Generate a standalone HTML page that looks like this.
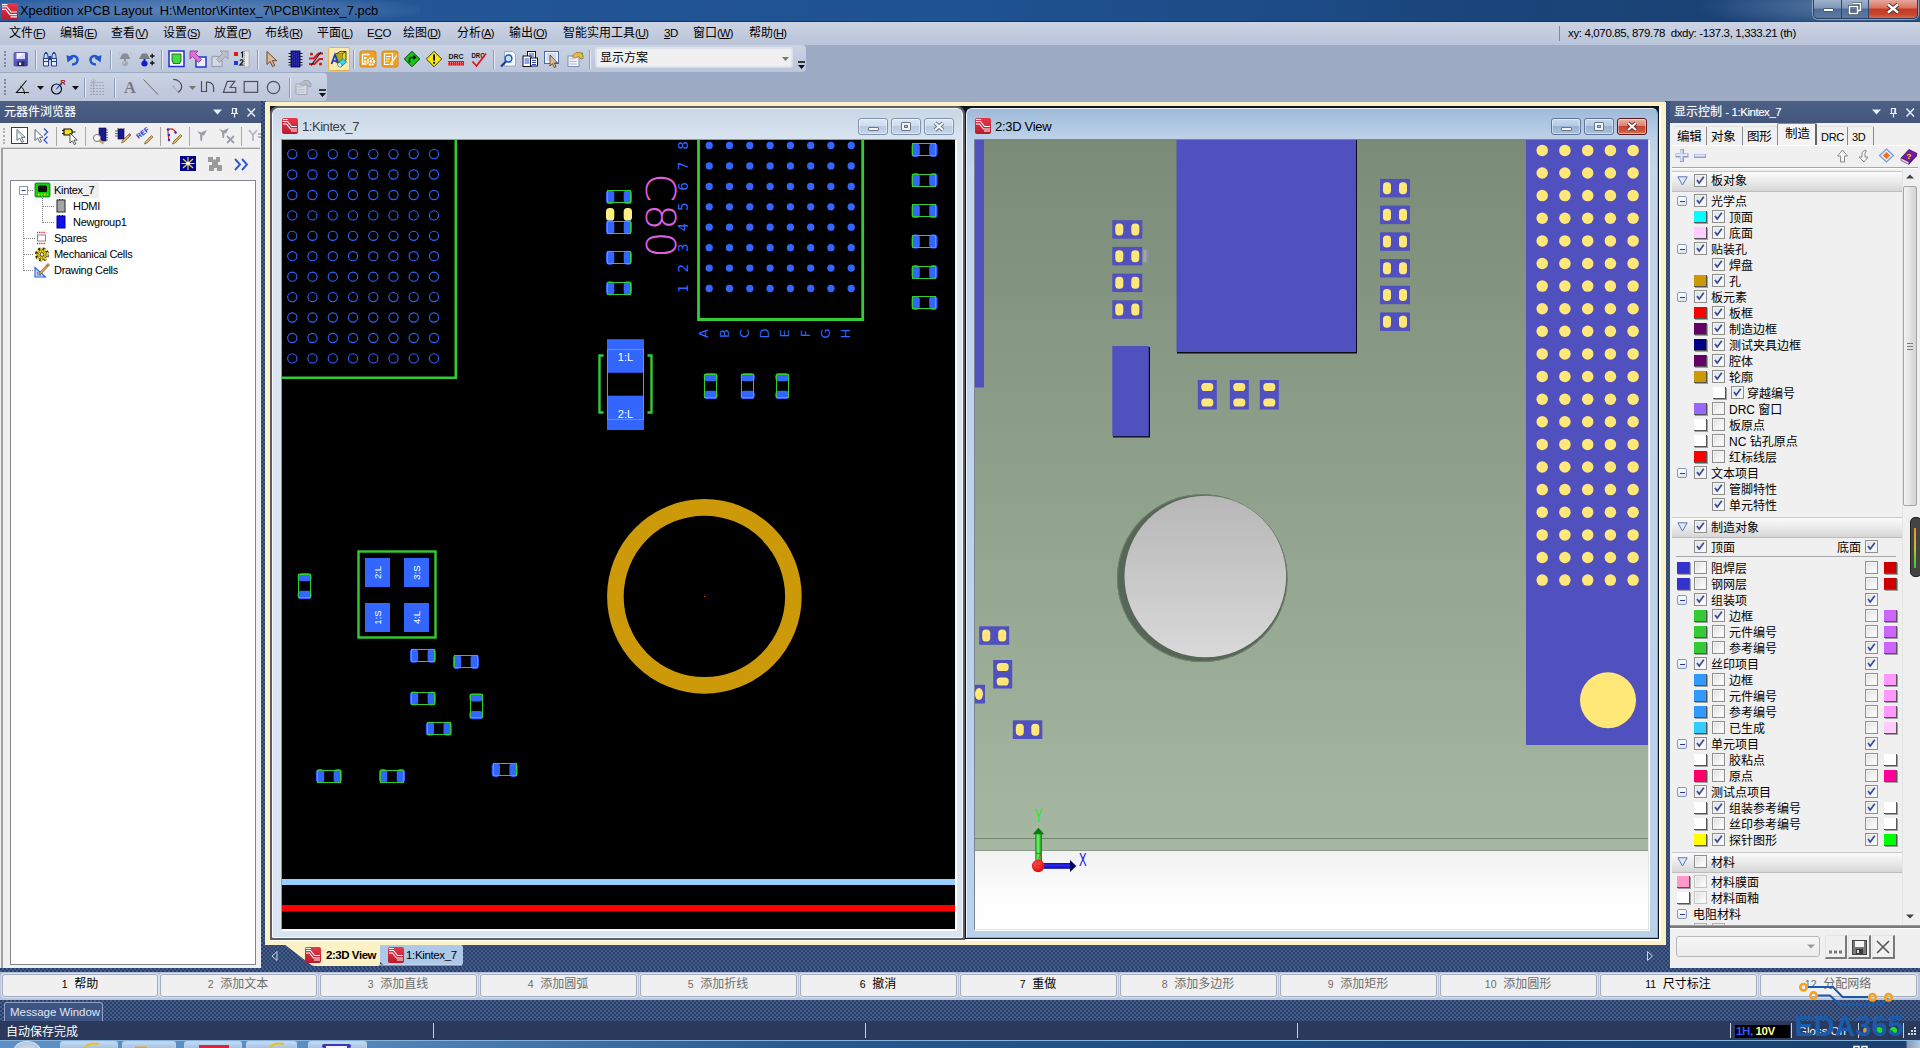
<!DOCTYPE html>
<html lang="zh"><head><meta charset="utf-8"><title>Xpedition xPCB Layout</title><style>
*{box-sizing:border-box;margin:0;padding:0}
html,body{width:1920px;height:1048px;overflow:hidden;background:#9daac4;}
body{font-family:"Liberation Sans","Noto Sans CJK SC",sans-serif;font-size:12px;color:#000;position:relative}
.abs{position:absolute}
#title{left:0;top:0;width:1920px;height:22px;background:linear-gradient(90deg,#2a5c9e 0%,#245696 20%,#1f5291 50%,#1d4d89 62%,#1a4479 80%,#1b4070 100%);border-bottom:1px solid #16345c}
#title .glow{left:-20px;top:-6px;width:440px;height:32px;background:radial-gradient(ellipse at center,rgba(140,170,215,.55) 0%,rgba(120,155,205,.35) 45%,rgba(80,120,180,0) 75%)}
#title .txt{left:20px;top:3px;font-size:12.9px;line-height:15px;color:#000;white-space:pre}
#menu{left:0;top:22px;width:1920px;height:23px;background:linear-gradient(#ccd4e3,#c3ccde 50%,#b9c4d9);}
#menu span{position:absolute;top:2px;font-size:12px;line-height:18px;white-space:nowrap}
#menu span i{font-style:normal;font-size:11px;letter-spacing:-.7px}
#menu u{text-decoration:underline}
.tb{background:linear-gradient(#cbd4e3,#c3ccdf 50%,#bcc6da);border-radius:0 4px 4px 0}
.sep{position:absolute;width:1px;background:#8e9bb5;border-right:1px solid #e6ebf3;width:2px}
.grip{position:absolute;width:3px;border-left:2px dotted #7c88a2;}
</style></head><body>
<div id="title" class="abs"><div class="abs glow"></div><div class="abs" style="left:1700px;top:-10px;width:240px;height:40px;background:radial-gradient(ellipse at 60% 40%,rgba(150,175,210,.5),rgba(120,150,195,.25) 45%,rgba(80,120,180,0) 72%)"></div><svg class="abs" style="left:1px;top:3px" width="17" height="17" viewBox="0 0 16 16"><defs><linearGradient id="lg1_3" x1="0" y1="0" x2="0" y2="1"><stop offset="0" stop-color="#e8384a"/><stop offset="1" stop-color="#b81a2c"/></linearGradient></defs><rect x="0" y="0" width="16" height="16" rx="2" fill="url(#lg1_3)"/><path d="M1 3.5h4.5l4 5H15M1 6h3.5l4 5H15M9 13h6M1 1.5h5" stroke="#fff" stroke-width="1.1" fill="none"/></svg><div class="abs txt">Xpedition xPCB Layout  H:\Mentor\Kintex_7\PCB\Kintex_7.pcb</div>
<div class="abs" style="left:1813px;top:0;width:105px;height:19px;border:1px solid #2a3f5e;border-top:none;border-radius:0 0 5px 5px;overflow:hidden;box-shadow:0 0 0 1px rgba(200,220,245,.55)">
<div class="abs" style="left:0;top:0;width:28px;height:18px;background:linear-gradient(#9fb2cc 0%,#7f97b8 45%,#4f6c95 50%,#5b7aa5 100%);border-right:1px solid #33496b"></div>
<div class="abs" style="left:28px;top:0;width:27px;height:18px;background:linear-gradient(#9fb2cc 0%,#7f97b8 45%,#4f6c95 50%,#5b7aa5 100%);border-right:1px solid #33496b"></div>
<div class="abs" style="left:55px;top:0;width:49px;height:18px;background:linear-gradient(#e6a89c 0%,#d9705f 45%,#c43a22 50%,#c9452e 80%,#d46a4e 100%)"></div>
<div class="abs" style="left:9px;top:8px;width:11px;height:4px;background:#fff;border:1px solid #4b5a70;border-radius:1px"></div>
<svg class="abs" style="left:34px;top:2px" width="14" height="13" viewBox="0 0 14 13"><path d="M4.5 1.5h8v7h-2.5M1.5 4.5h8v7h-8z" fill="none" stroke="#3c4b63" stroke-width="3"/><path d="M4.5 1.5h8v7h-2.5M1.5 4.5h8v7h-8z" fill="none" stroke="#fff" stroke-width="1.6"/></svg>
<svg class="abs" style="left:72px;top:3px" width="14" height="11" viewBox="0 0 14 11"><path d="M2 1.5l10 8M12 1.5l-10 8" stroke="#4a2a2a" stroke-width="4.2"/><path d="M2 1.5l10 8M12 1.5l-10 8" stroke="#fff" stroke-width="2.4"/></svg>
</div>
</div>
<div id="menu" class="abs"><span style="left:9px">文件<i>(<u>F</u>)</i></span><span style="left:60px">编辑<i>(<u>E</u>)</i></span><span style="left:111px">查看<i>(<u>V</u>)</i></span><span style="left:163px">设置<i>(<u>S</u>)</i></span><span style="left:214px">放置<i>(<u>P</u>)</i></span><span style="left:265px">布线<i>(<u>R</u>)</i></span><span style="left:317px">平面<i>(<u>L</u>)</i></span><span style="left:367px"><i style="font-size:11.5px;letter-spacing:-.3px">E<u>C</u>O</i></span><span style="left:403px">绘图<i>(<u>D</u>)</i></span><span style="left:457px">分析<i>(<u>A</u>)</i></span><span style="left:509px">输出<i>(<u>O</u>)</i></span><span style="left:563px">智能实用工具<i>(<u>U</u>)</i></span><span style="left:664px"><i style="font-size:11.5px;letter-spacing:-.3px"><u>3</u>D</i></span><span style="left:693px">窗口<i>(<u>W</u>)</i></span><span style="left:749px">帮助<i>(<u>H</u>)</i></span>
<div class="abs" style="left:1559px;top:4px;width:1px;height:15px;background:#7f8aa3"></div><span style="left:1568px;top:2px;font-size:11.5px;letter-spacing:-.36px;white-space:pre">xy: 4,070.85, 879.78  dxdy: -137.3, 1,333.21 (th)</span></div>
<div class="abs tb" style="left:0;top:45px;width:806px;height:27px"></div>
<div class="abs tb" style="left:0;top:73px;width:327px;height:28px"></div>
<div class="grip" style="left:4px;top:51px;height:16px"></div><div class="grip" style="left:4px;top:79px;height:16px"></div>
<div class="abs" style="left:328px;top:47px;width:22px;height:24px;background:#fbe9b0;border:1px solid #e5b650;border-radius:2px"></div>
<svg class="abs" style="left:12px;top:51px;overflow:visible" width="16" height="16" viewBox="0 0 16 16"><defs><linearGradient id="svg1" x1="0" y1="0" x2="1" y2="1"><stop offset="0" stop-color="#7070e0"/><stop offset="1" stop-color="#3a3aa8"/></linearGradient></defs><rect x="2" y="1.5" width="13.5" height="13.5" rx="1" fill="url(#svg1)" stroke="#5a4aa0" stroke-width=".8"/><path d="M4.5 2h8.5v6h-8.5z" fill="#f4f6ff"/><path d="M4.5 8L13 2v6z" fill="#d4daf4"/><rect x="5.5" y="10.5" width="7" height="4.5" fill="#26264a"/><rect x="7" y="11.5" width="2.2" height="2.5" fill="#e8e8f8"/></svg>
<svg class="abs" style="left:42px;top:51px;overflow:visible" width="16" height="16" viewBox="0 0 16 16"><path d="M1.5 7.5h5V15h-5zM9.5 7.5h5V15h-5z" fill="#e4ecfc" stroke="#24408a" stroke-width="1"/><path d="M2.5 2.5h3l.8 5h-4.6zM10.5 2.5h3l.8 5h-4.6z" fill="#c4d4f4" stroke="#24408a" stroke-width="1"/><rect x="6.5" y="5" width="3" height="4" fill="#24408a"/><path d="M1.5 10.5h5M9.5 10.5h5" stroke="#24408a" stroke-width="1"/><path d="M3 1.5h2M11 1.5h2" stroke="#24408a" stroke-width="1.2"/></svg>
<svg class="abs" style="left:65px;top:51px;overflow:visible" width="16" height="16" viewBox="0 0 16 16"><path d="M4.5 7.5C7 3.5 13 4.5 12.5 9.5c-.3 2.6-2.8 4.2-5.5 3.8" fill="none" stroke="#1d55cc" stroke-width="2.4"/><path d="M1.5 4l1 7.5 6-4.5z" fill="#1d55cc"/></svg>
<svg class="abs" style="left:87px;top:51px;overflow:visible" width="16" height="16" viewBox="0 0 16 16"><g transform="translate(16,0) scale(-1,1)"><path d="M4.5 7.5C7 3.5 13 4.5 12.5 9.5c-.3 2.6-2.8 4.2-5.5 3.8" fill="none" stroke="#1d55cc" stroke-width="2.4"/><path d="M1.5 4l1 7.5 6-4.5z" fill="#1d55cc"/></g></svg>
<svg class="abs" style="left:117px;top:51px;overflow:visible" width="16" height="16" viewBox="0 0 16 16"><path d="M2.5 8L5.5 2.5h5L13.5 8z" fill="#8a8f98"/><rect x="7" y="8" width="2" height="2" fill="#8a8f98"/><circle cx="8" cy="12.3" r="2.9" fill="#a4a9b2"/><circle cx="7.2" cy="11.5" r="1" fill="#c4c8d0"/><path d="M1 3l1.5 1M15 3l-1.5 1M2 1l1 1.2M14 1l-1 1.2" stroke="#a8adb6" stroke-width=".7"/></svg>
<svg class="abs" style="left:139px;top:51px;overflow:visible" width="16" height="16" viewBox="0 0 16 16"><path d="M0 8L3 2.5h5L11 8z" fill="#7a7f88"/><rect x="4.5" y="8" width="2" height="2" fill="#1828c0"/><path d="M5.5 9.5c2 0 3.2 1.5 3.2 3.2 0 1.5-1.2 2.8-3.2 2.8s-3.2-1.3-3.2-2.8c0-1.7 1.2-3.2 3.2-3.2z" fill="#1020d0"/><path d="M11 5h4.5M13.2 2.8v4.4M11 12h4.5M13.2 9.8v4.4" stroke="#111" stroke-width="1.3"/></svg>
<svg class="abs" style="left:168px;top:51px;overflow:visible" width="16" height="16" viewBox="0 0 16 16"><rect x="1" y="0" width="15" height="15.5" fill="#fff" stroke="#1a30d8" stroke-width="1.5"/><path d="M4 3h9v7.5l-1 .5v1.5h-7V11l-1-.5z" fill="#44dc44" stroke="#1a4a1a" stroke-width=".8"/></svg>
<svg class="abs" style="left:190px;top:51px;overflow:visible" width="16" height="16" viewBox="0 0 16 16"><rect x="6" y="6" width="10" height="10" fill="#eef" stroke="#2038d0" stroke-width="1.5"/><path d="M0 0h8l-2.5 2.5 6 6-3 3-6-6L0 8z" fill="#e070d8" stroke="#90308c" stroke-width=".8"/></svg>
<svg class="abs" style="left:212px;top:51px;overflow:visible" width="16" height="16" viewBox="0 0 16 16"><rect x="0" y="5.5" width="10" height="10" fill="#d4d9e2" stroke="#9ca3b0" stroke-width="1.3"/><path d="M16 0H8l2.5 2.5-6 6 3 3 6-6L16 8z" fill="#b9bec8" stroke="#9298a4" stroke-width=".8"/></svg>
<svg class="abs" style="left:234px;top:51px;overflow:visible" width="16" height="16" viewBox="0 0 16 16"><rect x="0" y="1" width="4" height="4" fill="#e01818"/><rect x="0" y="10" width="4" height="4" fill="#1838e0"/><rect x="10.5" y="0" width="4.5" height="16" fill="#e8e8e8" stroke="#666" stroke-width=".6" stroke-dasharray="1 1"/><path d="M7 2l1.5-1v5.5M6 9.5c1.5-1.5 3.5-.5 3 1l-3 3.5h3.5" fill="none" stroke="#111" stroke-width="1.2"/></svg>
<svg class="abs" style="left:264px;top:51px;overflow:visible" width="16" height="16" viewBox="0 0 16 16"><path d="M3 .5v13l3.2-3 2.3 5 2.2-1-2.3-4.8h4.3z" fill="#e0b896" stroke="#5a3a20" stroke-width=".9"/></svg>
<svg class="abs" style="left:287px;top:51px;overflow:visible" width="16" height="16" viewBox="0 0 16 16"><rect x="4" y="0" width="9" height="16" fill="#1a1a90" stroke="#000060" stroke-width=".8"/><path d="M1.5 2.5h2.5M1.5 5.5h2.5M1.5 8.5h2.5M1.5 11.5h2.5M1.5 14h2.5M13 2.5h2.5M13 5.5h2.5M13 8.5h2.5M13 11.5h2.5M13 14h2.5" stroke="#222" stroke-width="1"/><path d="M5 2h7M5 4h7M5 6h7M5 8h7M5 10h7M5 12h7M5 14h7" stroke="#4848c8" stroke-width=".7" stroke-dasharray="1 1"/></svg>
<svg class="abs" style="left:308px;top:51px;overflow:visible" width="16" height="16" viewBox="0 0 16 16"><path d="M1 7.5h4.5l5-5H15M1 13h5.5l5-5H15" fill="none" stroke="#d81818" stroke-width="1.8"/><path d="M3 14.5L13 1" stroke="#111" stroke-width="1.1"/><circle cx="3.5" cy="3" r="1.6" fill="#d81818"/><circle cx="12.5" cy="13" r="1.6" fill="#d81818"/></svg>
<svg class="abs" style="left:331px;top:51px;overflow:visible" width="16" height="16" viewBox="0 0 16 16"><path d="M5 3l4-2.5h6V9l-4 2.5H5z" fill="#e8d820" stroke="#222" stroke-width=".8"/><path d="M5 3h6v8.5M11 3l4-2.5" fill="none" stroke="#222" stroke-width=".8"/><path d="M5 3h6v8.5H5z" fill="#b8a810"/><path d="M.5 13L4 3.5 7.5 13M2 10h4" fill="none" stroke="#1838c8" stroke-width="1.7"/><path d="M7 12l5-4.5 3.5 3.5-5 4.5z" fill="#30d8e8" stroke="#0a6a78" stroke-width=".7"/><ellipse cx="8.8" cy="13.8" rx="2" ry="2.4" transform="rotate(-42 8.8 13.8)" fill="#d8f8ff" stroke="#0a6a78" stroke-width=".6"/></svg>
<svg class="abs" style="left:360px;top:51px;overflow:visible" width="16" height="16" viewBox="0 0 16 16"><rect x="0" y="0" width="16" height="16" rx="2" fill="#f0a020" stroke="#d88810"/><path d="M2.5 3.5h7M2.5 3.5v9.5h4" stroke="#fff" stroke-width="1.3" fill="none"/><rect x="4" y="6" width="2.5" height="2" fill="#fff"/><rect x="4" y="9.5" width="2.5" height="2" fill="#fff"/><circle cx="11" cy="10.5" r="3.2" fill="none" stroke="#fff" stroke-width="2" stroke-dasharray="1.7 .9"/><circle cx="11" cy="10.5" r="1.3" fill="#fff"/></svg>
<svg class="abs" style="left:382px;top:51px;overflow:visible" width="16" height="16" viewBox="0 0 16 16"><rect x="0" y="0" width="16" height="16" rx="2" fill="#f0a020" stroke="#d88810"/><path d="M2.5 2.5h8v11h-8z" stroke="#fff" stroke-width="1.2" fill="none"/><path d="M4 5.5h5M4 8h4M4 10.5h3" stroke="#fff" stroke-width="1"/><path d="M14.5 3.5L8 12l-1 2.5 2.3-1.3L15.5 5z" fill="#fff" stroke="#f0a020" stroke-width=".5"/></svg>
<svg class="abs" style="left:404px;top:51px;overflow:visible" width="16" height="16" viewBox="0 0 16 16"><path d="M8 .3L15.7 8 8 15.7.3 8z" fill="#18c818" stroke="#0a3a0a" stroke-width="1"/><path d="M5.5 11.5V8.2c0-1 .6-1.7 1.7-1.7h3" fill="none" stroke="#111" stroke-width="1.6"/><path d="M9.3 3.8L12.5 6.5 9.3 9.2z" fill="#111"/></svg>
<svg class="abs" style="left:426px;top:51px;overflow:visible" width="16" height="16" viewBox="0 0 16 16"><path d="M8 .3L15.7 8 8 15.7.3 8z" fill="#f8e810" stroke="#3a3a0a" stroke-width="1"/><rect x="7.1" y="3.5" width="1.9" height="6" fill="#111"/><rect x="7.1" y="10.8" width="1.9" height="1.9" fill="#111"/></svg>
<svg class="abs" style="left:448px;top:51px;overflow:visible" width="16" height="16" viewBox="0 0 16 16"><text x="8" y="8" font-size="7.5" font-weight="bold" text-anchor="middle" font-family="Liberation Sans,sans-serif" fill="#111" textLength="15" lengthAdjust="spacingAndGlyphs">DRC</text><rect x="0" y="10" width="16" height="4.5" fill="#e01818"/><path d="M0 11.5h16M0 13h16" stroke="#f8b0b0" stroke-width=".7" stroke-dasharray="1 1"/></svg>
<svg class="abs" style="left:471px;top:51px;overflow:visible" width="16" height="16" viewBox="0 0 16 16"><text x="7" y="6.5" font-size="7" font-weight="bold" text-anchor="middle" font-family="Liberation Sans,sans-serif" fill="#111" textLength="13" lengthAdjust="spacingAndGlyphs">DRC</text><path d="M1.5 10.5l4 4.5L15 2.5" fill="none" stroke="#e01010" stroke-width="1.7"/></svg>
<svg class="abs" style="left:500px;top:51px;overflow:visible" width="16" height="16" viewBox="0 0 16 16"><path d="M4.5 .5h8l3 3V15h-11z" fill="#f8faff" stroke="#8a9ab8" stroke-width=".8"/><path d="M6.5 4h6M6.5 11.5h6" stroke="#b8c4dc" stroke-width=".8"/><circle cx="8.5" cy="7.5" r="3.4" fill="#c8e4ff" stroke="#1858c8" stroke-width="1.5"/><path d="M6 10.5L1 15.5" stroke="#1838a8" stroke-width="2.2"/></svg>
<svg class="abs" style="left:522px;top:51px;overflow:visible" width="16" height="16" viewBox="0 0 16 16"><rect x="5.5" y=".5" width="8" height="9" fill="#fff" stroke="#111" stroke-width="1"/><rect x="1" y="5" width="8" height="10.5" fill="#fff" stroke="#111" stroke-width="1"/><rect x="8.5" y="7" width="7" height="8" fill="#fff" stroke="#111" stroke-width="1"/><path d="M7 3h5M7 5h5M2.5 8h5M2.5 10h5M2.5 12h5M10 9.5h4M10 11.5h4M10 13.5h4" stroke="#2848d8" stroke-width="1"/></svg>
<svg class="abs" style="left:544px;top:51px;overflow:visible" width="16" height="16" viewBox="0 0 16 16"><rect x=".5" y=".5" width="14" height="12" fill="#f4f8ff" stroke="#4868a8" stroke-width="1"/><path d="M2.5 3h10M2.5 5h10M2.5 7h10M2.5 9h10" stroke="#98acd8" stroke-width=".8"/><path d="M6 4v11l2.5-2.3 1.8 3.8 1.8-.8-1.8-3.7h3.4z" fill="#e0b896" stroke="#5a3a20" stroke-width=".8"/></svg>
<svg class="abs" style="left:567px;top:51px;overflow:visible" width="16" height="16" viewBox="0 0 16 16"><rect x="1" y="5" width="11" height="10.5" fill="#f0f4fc" stroke="#7888a8" stroke-width=".9"/><path d="M2.5 8h5M2.5 10.5h7M2.5 13h7" stroke="#a8b4cc" stroke-width=".9"/><path d="M5 5.5L9 1.5h4.5L16 4v3.5l-2 .5-2.5-2.5L8 7z" fill="#e8b848" stroke="#8a6a18" stroke-width=".7"/><path d="M13.5 2l2.5-.5v3" fill="#48a848"/></svg>
<div class="sep" style="left:35px;top:50px;height:19px"></div>
<div class="sep" style="left:110px;top:50px;height:19px"></div>
<div class="sep" style="left:161px;top:50px;height:19px"></div>
<div class="sep" style="left:257px;top:50px;height:19px"></div>
<div class="sep" style="left:353px;top:50px;height:19px"></div>
<div class="sep" style="left:493px;top:50px;height:19px"></div>
<div class="sep" style="left:589px;top:50px;height:19px"></div>
<div class="abs" style="left:596px;top:48px;width:196px;height:19px;background:#f0f0f0;border:1px solid #dfe3ea;border-radius:2px;box-shadow:0 0 0 1px rgba(255,255,255,.35)"><span class="abs" style="left:3px;top:2px;font-size:12px;line-height:15px;white-space:nowrap">显示方案</span></div>
<svg class="abs" style="left:781.5px;top:56.5px;overflow:visible" width="7" height="4" viewBox="0 0 7 4"><path d="M0 0h7L3.5 4z" fill="#7a7672"/></svg>
<svg class="abs" style="left:798px;top:62px;overflow:visible" width="7" height="7" viewBox="0 0 7 7"><path d="M0 0h7" stroke="#111" stroke-width="1.6"/><path d="M0 3h7L3.5 7z" fill="#111"/></svg>
<svg class="abs" style="left:15px;top:79px;overflow:visible" width="16" height="16" viewBox="0 0 16 16"><path d="M14 13.5H1.5L11.5 1.5" fill="none" stroke="#111" stroke-width="1.1"/><path d="M9.5 15c0-3.5-1.5-6-4-8" fill="none" stroke="#111" stroke-width="1"/></svg>
<svg class="abs" style="left:51px;top:79px;overflow:visible" width="16" height="16" viewBox="0 0 16 16"><circle cx="5.5" cy="10" r="5" fill="none" stroke="#111" stroke-width="1.2"/><path d="M5.5 10l5-6" stroke="#1838d8" stroke-width="1.1"/><text x="9.5" y="6" font-size="7" font-weight="bold" fill="#a01010" font-family="Liberation Sans,sans-serif">R</text></svg>
<svg class="abs" style="left:90px;top:79px;overflow:visible" width="16" height="16" viewBox="0 0 16 16"><path d="M3.5 0v16M0 3.5h14" stroke="#a4a9b4" stroke-width=".8"/><path d="M1 1l5 5M6 1L1 6" stroke="#a4a9b4" stroke-width=".6"/><path d="M.5 6.5h15M.5 9.5h15M.5 12.5h15M.5 15.5h15" stroke="#8a8f9a" stroke-width="1.2" stroke-dasharray="1.2 1.8"/></svg>
<svg class="abs" style="left:122px;top:79px;overflow:visible" width="16" height="16" viewBox="0 0 16 16"><text x="8" y="14" font-size="16.5" font-weight="bold" text-anchor="middle" fill="#7c7c80" font-family="Liberation Serif,serif">A</text></svg>
<svg class="abs" style="left:143px;top:79px;overflow:visible" width="16" height="16" viewBox="0 0 16 16"><path d="M.5 .5l14.5 15" stroke="#6c6c72" stroke-width="1"/></svg>
<svg class="abs" style="left:168px;top:79px;overflow:visible" width="16" height="16" viewBox="0 0 16 16"><path d="M5.2 .4C10 .4 13.7 4 13.7 7.5c0 2.5-1.4 4.5-3.5 6" fill="none" stroke="#4a4f5c" stroke-width="1.1"/><path d="M5 7.3l5.2 6.2" stroke="#8a8f9a" stroke-width=".7"/><path d="M5.3 6.2l1.2 1.3-1.2 1.3-1.2-1.3z" fill="#9a9fa8"/></svg>
<svg class="abs" style="left:199px;top:79px;overflow:visible" width="16" height="16" viewBox="0 0 16 16"><path d="M2.5 2.1V12.5H7.5V3.1H9.2C12.5 3.1 14.6 6 14.6 8.8V12.9" fill="none" stroke="#4a4f5c" stroke-width="1.2"/></svg>
<svg class="abs" style="left:221px;top:79px;overflow:visible" width="16" height="16" viewBox="0 0 16 16"><path d="M13.8 2.3H6.3L2.4 13.3H14.7V8.5H9.250z" fill="none" stroke="#4a4f5c" stroke-width="1.2"/></svg>
<svg class="abs" style="left:243px;top:79px;overflow:visible" width="16" height="16" viewBox="0 0 16 16"><rect x="1.2" y="2.5" width="13.4" height="10.8" fill="none" stroke="#4a4f5c" stroke-width="1.2"/></svg>
<svg class="abs" style="left:265px;top:79px;overflow:visible" width="16" height="16" viewBox="0 0 16 16"><circle cx="8.5" cy="8.5" r="6.2" fill="none" stroke="#4a4f5c" stroke-width="1.2"/></svg>
<svg class="abs" style="left:295px;top:79px;overflow:visible" width="16" height="16" viewBox="0 0 16 16"><rect x="1" y="5" width="11" height="10.5" fill="#d4d9e2" stroke="#9ca3b0" stroke-width=".9"/><path d="M2.5 8h5M2.5 10.5h7M2.5 13h7" stroke="#b4bac6" stroke-width=".9"/><path d="M5 5.5L9 1.5h4.5L16 4v3.5l-2 .5-2.5-2.5L8 7z" fill="#b4bac6" stroke="#9298a4" stroke-width=".7"/></svg>
<svg class="abs" style="left:36.5px;top:86px;overflow:visible" width="7" height="4" viewBox="0 0 7 4"><path d="M0 0h7L3.5 4z" fill="#111"/></svg>
<svg class="abs" style="left:71.5px;top:86px;overflow:visible" width="7" height="4" viewBox="0 0 7 4"><path d="M0 0h7L3.5 4z" fill="#111"/></svg>
<svg class="abs" style="left:188.5px;top:86px;overflow:visible" width="7" height="4" viewBox="0 0 7 4"><path d="M0 0h7L3.5 4z" fill="#7a7672"/></svg>
<svg class="abs" style="left:318.5px;top:90px;overflow:visible" width="7" height="7" viewBox="0 0 7 7"><path d="M0 0h7" stroke="#111" stroke-width="1.6"/><path d="M0 3h7L3.5 7z" fill="#111"/></svg>
<div class="sep" style="left:84px;top:78px;height:19px"></div>
<div class="sep" style="left:114px;top:78px;height:19px"></div>
<div class="sep" style="left:289px;top:78px;height:19px"></div>
<div class="abs" style="left:0;top:101px;width:261px;height:867px;background:#f0f0f0"></div>
<div class="abs" style="left:0;top:101px;width:261px;height:22px;background:linear-gradient(#4d5f85,#475a80 60%,#43557b);"><span class="abs" style="left:4px;top:3px;color:#fff;font-size:12px;line-height:17px;white-space:nowrap;text-shadow:0 0 1px rgba(255,255,255,.35)">元器件浏览器</span></div>
<svg class="abs" style="left:212px;top:107px" width="46" height="11" viewBox="0 0 46 11"><path d="M1 2.5h9L5.5 7.5z" fill="#e8ecf4"/><path d="M20.5 1.5h4v5h-4zM19 6.5h7M22.5 6.5v4" fill="none" stroke="#e8ecf4" stroke-width="1.2"/><path d="M24 1.5v5" stroke="#e8ecf4" stroke-width="1.5"/><path d="M35.5 1.5l7.5 8M43 1.5l-7.5 8" stroke="#e8ecf4" stroke-width="1.5"/></svg>
<div class="grip" style="left:3px;top:128px;height:16px;border-left-color:#b0b0b0"></div>
<div class="abs" style="left:11px;top:127px;width:17px;height:17px;border:1px solid #1a30d8;background:#fff"></div>
<svg class="abs" style="left:11.5px;top:127.5px;overflow:visible" width="16" height="16" viewBox="0 0 16 16"><path d="M5 1.5v11l2.7-2.5 2 4.3 1.8-.8-2-4.2h3.6z" fill="#fff" stroke="#4a5a6a" stroke-width=".9"/><path d="M6 4l4 5" stroke="#3a9a3a" stroke-width=".6"/></svg>
<svg class="abs" style="left:33px;top:127.5px;overflow:visible" width="16" height="16" viewBox="0 0 16 16"><path d="M2 1.5v11l2.7-2.5 2 4.3 1.8-.8-2-4.2h3.6z" fill="#fff" stroke="#4a5a6a" stroke-width=".9"/><path d="M11 .5l3.5 3.5-3.5 3.5M14.5 8.5L11 12l3.5 3.5" fill="none" stroke="#2a5ad8" stroke-width="1.3"/></svg>
<svg class="abs" style="left:62px;top:127.5px;overflow:visible" width="16" height="16" viewBox="0 0 16 16"><path d="M2 1h6c3 0 3 6 0 6H2z" fill="#f0e020" stroke="#111" stroke-width="1.2"/><path d="M0 2.5h2M0 5.5h2M10.5 4h3" stroke="#111" stroke-width="1.2"/><path d="M8 5v10l2.4-2.2 1.8 3.7 1.6-.7-1.8-3.7h3.2z" fill="#fff" stroke="#333" stroke-width=".8"/></svg>
<svg class="abs" style="left:92px;top:127.5px;overflow:visible" width="16" height="16" viewBox="0 0 16 16"><rect x="7" y="0" width="7" height="13" fill="#1a1a90" stroke="#000060" stroke-width=".6"/><path d="M14 2h2M14 4.5h2M14 7h2M14 9.5h2M14 12h2" stroke="#555" stroke-width=".8"/><circle cx="5" cy="10" r="3.6" fill="#f4f4f4" stroke="#777" stroke-width="1"/><path d="M7.5 12.5l4 3" stroke="#c8a070" stroke-width="2.2"/></svg>
<svg class="abs" style="left:114.5px;top:127.5px;overflow:visible" width="16" height="16" viewBox="0 0 16 16"><rect x="3" y="1" width="6" height="10" fill="#1a1a90" stroke="#000060" stroke-width=".6"/><path d="M0 3h3M0 5.5h3M0 8h3M3 0v1M6 0v1M9 0v1" stroke="#444" stroke-width=".8"/><path d="M14.5 5.5l1.5 1.5-7 7-2.5 1 1-2.5z" fill="#e0b060" stroke="#7a5a20" stroke-width=".7"/><path d="M13.5 6.5l1.5 1.5" stroke="#e05080" stroke-width="1.5"/></svg>
<svg class="abs" style="left:137px;top:127.5px;overflow:visible" width="16" height="16" viewBox="0 0 16 16"><text x="0" y="0" transform="translate(1.5 11) rotate(-38)" font-size="7" font-weight="bold" fill="#1a30d8" font-family="Liberation Sans,sans-serif">REF</text><path d="M14.5 7.5l1.5 1.5-6 6-2.5 1 1-2.5z" fill="#e0b060" stroke="#7a5a20" stroke-width=".7"/></svg>
<svg class="abs" style="left:166px;top:127.5px;overflow:visible" width="16" height="16" viewBox="0 0 16 16"><path d="M2 1.5c5-2 7 1 8 3.5M2 1.5c0 5 0 7 1 10" fill="none" stroke="#e01818" stroke-width="1.1"/><circle cx="2" cy="1.5" r="1.2" fill="#1a30d8"/><circle cx="9.5" cy="4.5" r="1.2" fill="#1a30d8"/><circle cx="3" cy="12" r="1.2" fill="#1a30d8"/><circle cx="3" cy="7" r="1.2" fill="#1a30d8"/><path d="M14.5 6.5l1.5 1.5-7 7-2.5 1 1-2.5z" fill="#e0b060" stroke="#7a5a20" stroke-width=".7"/></svg>
<svg class="abs" style="left:195px;top:127.5px;overflow:visible" width="16" height="16" viewBox="0 0 16 16"><path d="M2 3l4 1.5L12 2l-3 5.5L7.5 7 7 13H5.5L5 6.5z" fill="#9a9ea6"/></svg>
<svg class="abs" style="left:218.5px;top:127.5px;overflow:visible" width="16" height="16" viewBox="0 0 16 16"><path d="M0 1l4 1.5L10 0 7 5.5 5.5 5 5 10H3.5L3 4.5z" fill="#9a9ea6"/><path d="M8 8l7 7M15 8l-7 7" stroke="#9a9ea6" stroke-width="1.8"/></svg>
<div class="abs" style="left:247px;top:127px;width:14px;height:17px;overflow:hidden"><svg class="abs" style="left:0px;top:0.5px;overflow:visible" width="16" height="16" viewBox="0 0 16 16"><path d="M2 2l4 5v6M10 2L6 7M11 6h5M11 9h5" fill="none" stroke="#b4b8c0" stroke-width="1.8"/></svg></div>
<div class="abs" style="left:56px;top:127px;width:1px;height:19px;background:#a8a8a8"></div>
<div class="abs" style="left:85px;top:127px;width:1px;height:19px;background:#a8a8a8"></div>
<div class="abs" style="left:160px;top:127px;width:1px;height:19px;background:#a8a8a8"></div>
<div class="abs" style="left:189px;top:127px;width:1px;height:19px;background:#a8a8a8"></div>
<div class="abs" style="left:241px;top:127px;width:1px;height:19px;background:#a8a8a8"></div>
<div class="abs" style="left:1px;top:147px;width:259px;height:821px;border-left:2px solid #a0a0a0;border-top:2px solid #a0a0a0;border-image:linear-gradient(#a0a0a0,#a0a0a0) 1;background:#f0f0f0"></div>
<div class="abs" style="left:1px;top:147px;width:259px;height:1px;background:#d8d8d8"></div>
<svg class="abs" style="left:180px;top:156px;overflow:visible" width="16" height="15" viewBox="0 0 16 15"><rect x="0" y="0" width="16" height="15" fill="#00008b"/><path d="M8 1v13M1.5 7.5h13M3 3l10 9M13 3L3 12" stroke="#f0e040" stroke-width="1.1"/><circle cx="8" cy="7.5" r="1.8" fill="#fffbd0"/></svg>
<svg class="abs" style="left:207px;top:156px;overflow:visible" width="16" height="16" viewBox="0 0 16 16"><path d="M1 1h5v2.5h3V1h4v5h-2v3h4v6h-5v-3H7v3H2V9h3V6H1z" fill="#9a9a9a"/></svg>
<svg class="abs" style="left:234px;top:156.5px;overflow:visible" width="14" height="15" viewBox="0 0 14 15"><path d="M1 2l5 5.5-5 5.5M8 2l5 5.5-5 5.5" fill="none" stroke="#2a5ad8" stroke-width="1.9"/></svg>
<div class="abs" style="left:10px;top:180px;width:246px;height:785px;background:#fff;border:1px solid #828790"></div>
<svg class="abs" style="left:10px;top:180px" width="100" height="100" viewBox="10 180 100 100"><path d="M23.5 196v75M24 238.5h12M24 254.5h10M24 270.5h10M28 190.5h6M42.5 198v25M43 206.5h11M43 222.5h11" fill="none" stroke="#808080" stroke-width="1" stroke-dasharray="1 1"/><rect x="19.5" y="186.5" width="8" height="8" fill="#fff" stroke="#8a9ab0"/><path d="M21.5 190.5h4" stroke="#2a3a8a" stroke-width="1"/></svg>
<div class="abs" style="left:53px;top:182px;width:46px;height:16px;background:#efefef"></div>
<svg class="abs" style="left:34.5px;top:183px;overflow:visible" width="15" height="14" viewBox="0 0 15 14"><rect x="0" y="0" width="15" height="14" rx="1" fill="#10d010" stroke="#0a700a" stroke-width=".8"/><rect x="3" y="2.5" width="9" height="6.5" rx="1.5" fill="#111"/><path d="M3 11.5h1.5M6 11.5h1.5M9 11.5h1.5M12 11.5h1" stroke="#f0e020" stroke-width="1.5"/></svg>
<span class="abs" style="left:54px;top:182px;font-size:11px;line-height:16px;white-space:nowrap;letter-spacing:-.3px">Kintex_7</span>
<svg class="abs" style="left:56px;top:199px;overflow:visible" width="10" height="14" viewBox="0 0 10 14"><rect x="1" y="1" width="8" height="12" fill="#b8b8b8" stroke="#222" stroke-width="1"/><path d="M1.5 3h7M1.5 5h7M1.5 7h7M1.5 9h7M1.5 11h7" stroke="#555" stroke-width=".7" stroke-dasharray="1 1"/><path d="M3.5 0v1M6.5 0v1" stroke="#222"/></svg>
<span class="abs" style="left:73px;top:198px;font-size:11px;line-height:16px;white-space:nowrap;letter-spacing:-.3px">HDMI</span>
<svg class="abs" style="left:56px;top:215px;overflow:visible" width="10" height="14" viewBox="0 0 10 14"><rect x="1" y="1" width="8" height="12" fill="#1010e8" stroke="#00009a" stroke-width="1"/><path d="M3.5 0v1M6.5 0v1" stroke="#00009a"/></svg>
<span class="abs" style="left:73px;top:214px;font-size:11px;line-height:16px;white-space:nowrap;letter-spacing:-.3px">Newgroup1</span>
<svg class="abs" style="left:36px;top:231px;overflow:visible" width="11" height="14" viewBox="0 0 11 14"><rect x="1.5" y="4" width="8" height="6" fill="#fff" stroke="#888" stroke-width="1"/><path d="M1 1.5h9M1 12.5h9" stroke="#e01818" stroke-width="1.6" stroke-dasharray="1.2 1"/></svg>
<span class="abs" style="left:54px;top:230px;font-size:11px;line-height:16px;white-space:nowrap;letter-spacing:-.3px">Spares</span>
<svg class="abs" style="left:33.5px;top:247px;overflow:visible" width="16" height="14" viewBox="0 0 16 14"><circle cx="8" cy="7.5" r="5" fill="none" stroke="#222" stroke-width="4.2" stroke-dasharray="2.2 1.72"/><circle cx="8" cy="7.5" r="5" fill="#e8d020" stroke="#222" stroke-width=".9"/><circle cx="8" cy="7.5" r="5.5" fill="none" stroke="#e8d020" stroke-width="2.2" stroke-dasharray="2 1.92"/><circle cx="8" cy="7.5" r="1.8" fill="#fff" stroke="#222" stroke-width=".9"/><circle cx="8" cy="7.5" r="3.6" fill="none" stroke="#222" stroke-width=".7" stroke-dasharray="1 1.2"/></svg>
<span class="abs" style="left:54px;top:246px;font-size:11px;line-height:16px;white-space:nowrap;letter-spacing:-.3px">Mechanical Cells</span>
<svg class="abs" style="left:33.5px;top:263px;overflow:visible" width="16" height="14" viewBox="0 0 16 14"><path d="M1 4.5V14h10.5z" fill="#c8dcf8" stroke="#2a5ad8" stroke-width="1.1"/><path d="M3.5 9v3h3.5z" fill="#fff" stroke="#2a5ad8" stroke-width=".7"/><path d="M14 .5l1.5 1.5-8 8.5-2.5 1 1-2.5z" fill="#e8a050" stroke="#8a5a20" stroke-width=".7"/><path d="M12.5 2l1.5 1.5" stroke="#e05070" stroke-width="1.6"/></svg>
<span class="abs" style="left:54px;top:262px;font-size:11px;line-height:16px;white-space:nowrap;letter-spacing:-.3px">Drawing Cells</span>
<div class="abs" style="left:261px;top:101px;width:5px;height:870px;background-color:#435e8d;background-image:radial-gradient(circle at 1px 1px,#2b3f68 .75px,rgba(43,63,104,0) 1.15px),radial-gradient(circle at 3px 3px,#2b3f68 .75px,rgba(43,63,104,0) 1.15px);background-size:4px 4px"></div>
<div class="abs" style="left:1665px;top:101px;width:5px;height:870px;background-color:#435e8d;background-image:radial-gradient(circle at 1px 1px,#2b3f68 .75px,rgba(43,63,104,0) 1.15px),radial-gradient(circle at 3px 3px,#2b3f68 .75px,rgba(43,63,104,0) 1.15px);background-size:4px 4px"></div>
<div class="abs" style="left:261px;top:940px;width:1409px;height:32px;background-color:#435e8d;background-image:radial-gradient(circle at 1px 1px,#2b3f68 .75px,rgba(43,63,104,0) 1.15px),radial-gradient(circle at 3px 3px,#2b3f68 .75px,rgba(43,63,104,0) 1.15px);background-size:4px 4px"></div><div class="abs" style="left:0;top:968px;width:1920px;height:4px;background-color:#435e8d;background-image:radial-gradient(circle at 1px 1px,#2b3f68 .75px,rgba(43,63,104,0) 1.15px),radial-gradient(circle at 3px 3px,#2b3f68 .75px,rgba(43,63,104,0) 1.15px);background-size:4px 4px"></div>
<div class="abs" style="left:265px;top:102px;width:1401px;height:842.5px;background:#fdf1c6"></div>
<div class="abs" style="left:270px;top:106px;width:1391px;height:835px;background:#fff"></div>
<div class="abs" style="left:270px;top:106px;width:1389px;height:833px;background:#10141c"></div>
<div class="abs" style="left:272px;top:108px;width:691px;height:830px;background:linear-gradient(#c9d7e6 0,#d9e4f0 30px,#dce6f2 60px,#d9e5f2 100%);border:1px solid #f6f9fc;border-radius:6px 6px 0 0;box-shadow:0 0 0 2px #5c5f66"></div>
<div class="abs" style="left:281px;top:139px;width:675px;height:791px;border:1px solid #8e99a8;border-right-color:#f4f7fa;border-bottom-color:#f4f7fa;box-shadow:1px 1px 0 #fff"></div>
<svg class="abs" style="left:282px;top:118px" width="16" height="16" viewBox="0 0 16 16"><defs><linearGradient id="lg282_118" x1="0" y1="0" x2="0" y2="1"><stop offset="0" stop-color="#e8384a"/><stop offset="1" stop-color="#b81a2c"/></linearGradient></defs><rect x="0" y="0" width="16" height="16" rx="2" fill="url(#lg282_118)"/><path d="M1 3.5h4.5l4 5H15M1 6h3.5l4 5H15M9 13h6M1 1.5h5" stroke="#fff" stroke-width="1.1" fill="none"/></svg>
<span class="abs" style="left:302px;top:119px;font-size:13px;line-height:16px;color:#3c3c3c;white-space:nowrap;letter-spacing:-.45px">1:Kintex_7</span>
<div class="abs" style="left:858px;top:118px;width:30px;height:17px;border:1px solid #7f93b0;border-radius:3px;background:linear-gradient(#dfe8f3 0%,#cfdcec 45%,#b9cbe1 50%,#c5d5e9 100%);box-shadow:inset 0 0 0 1px rgba(255,255,255,.45)"></div><div class="abs" style="left:891px;top:118px;width:30px;height:17px;border:1px solid #7f93b0;border-radius:3px;background:linear-gradient(#dfe8f3 0%,#cfdcec 45%,#b9cbe1 50%,#c5d5e9 100%);box-shadow:inset 0 0 0 1px rgba(255,255,255,.45)"></div><div class="abs" style="left:924px;top:118px;width:30px;height:17px;border:1px solid #7f93b0;border-radius:3px;background:linear-gradient(#dfe8f3 0%,#cfdcec 45%,#b9cbe1 50%,#c5d5e9 100%);box-shadow:inset 0 0 0 1px rgba(255,255,255,.45)"></div><div class="abs" style="left:868px;top:127px;width:11px;height:4px;background:#f4f4f4;border:1px solid #6a7486;border-radius:1px"></div><div class="abs" style="left:901px;top:122px;width:10px;height:9px;background:#f4f4f4;border:1px solid #6a7486;border-radius:1px"><div class="abs" style="left:2px;top:2px;width:4px;height:3px;border:1px solid #6a7486;background:#a9c1de"></div></div><svg class="abs" style="left:933px;top:121px" width="12" height="11" viewBox="0 0 12 11"><path d="M2 2l8 7M10 2l-8 7" stroke="#6a7486" stroke-width="4"/><path d="M2 2l8 7M10 2l-8 7" stroke="#f8f8f8" stroke-width="2.2"/></svg>
<svg class="abs" style="left:282px;top:140px" width="673" height="789" viewBox="282 140 673 789"><rect x="282" y="140" width="673" height="789" fill="#000"/><g fill="none" stroke="#3366ff" stroke-width="1.1"><circle cx="292.3" cy="154.1" r="4.6"/><circle cx="312.5" cy="154.1" r="4.6"/><circle cx="332.8" cy="154.1" r="4.6"/><circle cx="353.0" cy="154.1" r="4.6"/><circle cx="373.3" cy="154.1" r="4.6"/><circle cx="393.5" cy="154.1" r="4.6"/><circle cx="413.7" cy="154.1" r="4.6"/><circle cx="434.0" cy="154.1" r="4.6"/><circle cx="292.3" cy="174.5" r="4.6"/><circle cx="312.5" cy="174.5" r="4.6"/><circle cx="332.8" cy="174.5" r="4.6"/><circle cx="353.0" cy="174.5" r="4.6"/><circle cx="373.3" cy="174.5" r="4.6"/><circle cx="393.5" cy="174.5" r="4.6"/><circle cx="413.7" cy="174.5" r="4.6"/><circle cx="434.0" cy="174.5" r="4.6"/><circle cx="292.3" cy="195.0" r="4.6"/><circle cx="312.5" cy="195.0" r="4.6"/><circle cx="332.8" cy="195.0" r="4.6"/><circle cx="353.0" cy="195.0" r="4.6"/><circle cx="373.3" cy="195.0" r="4.6"/><circle cx="393.5" cy="195.0" r="4.6"/><circle cx="413.7" cy="195.0" r="4.6"/><circle cx="434.0" cy="195.0" r="4.6"/><circle cx="292.3" cy="215.4" r="4.6"/><circle cx="312.5" cy="215.4" r="4.6"/><circle cx="332.8" cy="215.4" r="4.6"/><circle cx="353.0" cy="215.4" r="4.6"/><circle cx="373.3" cy="215.4" r="4.6"/><circle cx="393.5" cy="215.4" r="4.6"/><circle cx="413.7" cy="215.4" r="4.6"/><circle cx="434.0" cy="215.4" r="4.6"/><circle cx="292.3" cy="235.8" r="4.6"/><circle cx="312.5" cy="235.8" r="4.6"/><circle cx="332.8" cy="235.8" r="4.6"/><circle cx="353.0" cy="235.8" r="4.6"/><circle cx="373.3" cy="235.8" r="4.6"/><circle cx="393.5" cy="235.8" r="4.6"/><circle cx="413.7" cy="235.8" r="4.6"/><circle cx="434.0" cy="235.8" r="4.6"/><circle cx="292.3" cy="256.2" r="4.6"/><circle cx="312.5" cy="256.2" r="4.6"/><circle cx="332.8" cy="256.2" r="4.6"/><circle cx="353.0" cy="256.2" r="4.6"/><circle cx="373.3" cy="256.2" r="4.6"/><circle cx="393.5" cy="256.2" r="4.6"/><circle cx="413.7" cy="256.2" r="4.6"/><circle cx="434.0" cy="256.2" r="4.6"/><circle cx="292.3" cy="276.7" r="4.6"/><circle cx="312.5" cy="276.7" r="4.6"/><circle cx="332.8" cy="276.7" r="4.6"/><circle cx="353.0" cy="276.7" r="4.6"/><circle cx="373.3" cy="276.7" r="4.6"/><circle cx="393.5" cy="276.7" r="4.6"/><circle cx="413.7" cy="276.7" r="4.6"/><circle cx="434.0" cy="276.7" r="4.6"/><circle cx="292.3" cy="297.1" r="4.6"/><circle cx="312.5" cy="297.1" r="4.6"/><circle cx="332.8" cy="297.1" r="4.6"/><circle cx="353.0" cy="297.1" r="4.6"/><circle cx="373.3" cy="297.1" r="4.6"/><circle cx="393.5" cy="297.1" r="4.6"/><circle cx="413.7" cy="297.1" r="4.6"/><circle cx="434.0" cy="297.1" r="4.6"/><circle cx="292.3" cy="317.5" r="4.6"/><circle cx="312.5" cy="317.5" r="4.6"/><circle cx="332.8" cy="317.5" r="4.6"/><circle cx="353.0" cy="317.5" r="4.6"/><circle cx="373.3" cy="317.5" r="4.6"/><circle cx="393.5" cy="317.5" r="4.6"/><circle cx="413.7" cy="317.5" r="4.6"/><circle cx="434.0" cy="317.5" r="4.6"/><circle cx="292.3" cy="338.0" r="4.6"/><circle cx="312.5" cy="338.0" r="4.6"/><circle cx="332.8" cy="338.0" r="4.6"/><circle cx="353.0" cy="338.0" r="4.6"/><circle cx="373.3" cy="338.0" r="4.6"/><circle cx="393.5" cy="338.0" r="4.6"/><circle cx="413.7" cy="338.0" r="4.6"/><circle cx="434.0" cy="338.0" r="4.6"/><circle cx="292.3" cy="358.4" r="4.6"/><circle cx="312.5" cy="358.4" r="4.6"/><circle cx="332.8" cy="358.4" r="4.6"/><circle cx="353.0" cy="358.4" r="4.6"/><circle cx="373.3" cy="358.4" r="4.6"/><circle cx="393.5" cy="358.4" r="4.6"/><circle cx="413.7" cy="358.4" r="4.6"/><circle cx="434.0" cy="358.4" r="4.6"/></g><path d="M455.8 140V377.8H282" fill="none" stroke="#33cc33" stroke-width="2.6"/><path d="M698.5 140V319.5H862.7V140" fill="none" stroke="#33cc33" stroke-width="2.8"/><g fill="#3366ff"><circle cx="709.2" cy="145.5" r="3.65"/><circle cx="729.5" cy="145.5" r="3.65"/><circle cx="749.8" cy="145.5" r="3.65"/><circle cx="770.1" cy="145.5" r="3.65"/><circle cx="790.4" cy="145.5" r="3.65"/><circle cx="810.7" cy="145.5" r="3.65"/><circle cx="830.9" cy="145.5" r="3.65"/><circle cx="851.2" cy="145.5" r="3.65"/><circle cx="709.2" cy="165.9" r="3.65"/><circle cx="729.5" cy="165.9" r="3.65"/><circle cx="749.8" cy="165.9" r="3.65"/><circle cx="770.1" cy="165.9" r="3.65"/><circle cx="790.4" cy="165.9" r="3.65"/><circle cx="810.7" cy="165.9" r="3.65"/><circle cx="830.9" cy="165.9" r="3.65"/><circle cx="851.2" cy="165.9" r="3.65"/><circle cx="709.2" cy="186.4" r="3.65"/><circle cx="729.5" cy="186.4" r="3.65"/><circle cx="749.8" cy="186.4" r="3.65"/><circle cx="770.1" cy="186.4" r="3.65"/><circle cx="790.4" cy="186.4" r="3.65"/><circle cx="810.7" cy="186.4" r="3.65"/><circle cx="830.9" cy="186.4" r="3.65"/><circle cx="851.2" cy="186.4" r="3.65"/><circle cx="709.2" cy="206.8" r="3.65"/><circle cx="729.5" cy="206.8" r="3.65"/><circle cx="749.8" cy="206.8" r="3.65"/><circle cx="770.1" cy="206.8" r="3.65"/><circle cx="790.4" cy="206.8" r="3.65"/><circle cx="810.7" cy="206.8" r="3.65"/><circle cx="830.9" cy="206.8" r="3.65"/><circle cx="851.2" cy="206.8" r="3.65"/><circle cx="709.2" cy="227.2" r="3.65"/><circle cx="729.5" cy="227.2" r="3.65"/><circle cx="749.8" cy="227.2" r="3.65"/><circle cx="770.1" cy="227.2" r="3.65"/><circle cx="790.4" cy="227.2" r="3.65"/><circle cx="810.7" cy="227.2" r="3.65"/><circle cx="830.9" cy="227.2" r="3.65"/><circle cx="851.2" cy="227.2" r="3.65"/><circle cx="709.2" cy="247.7" r="3.65"/><circle cx="729.5" cy="247.7" r="3.65"/><circle cx="749.8" cy="247.7" r="3.65"/><circle cx="770.1" cy="247.7" r="3.65"/><circle cx="790.4" cy="247.7" r="3.65"/><circle cx="810.7" cy="247.7" r="3.65"/><circle cx="830.9" cy="247.7" r="3.65"/><circle cx="851.2" cy="247.7" r="3.65"/><circle cx="709.2" cy="268.1" r="3.65"/><circle cx="729.5" cy="268.1" r="3.65"/><circle cx="749.8" cy="268.1" r="3.65"/><circle cx="770.1" cy="268.1" r="3.65"/><circle cx="790.4" cy="268.1" r="3.65"/><circle cx="810.7" cy="268.1" r="3.65"/><circle cx="830.9" cy="268.1" r="3.65"/><circle cx="851.2" cy="268.1" r="3.65"/><circle cx="709.2" cy="288.5" r="3.65"/><circle cx="729.5" cy="288.5" r="3.65"/><circle cx="749.8" cy="288.5" r="3.65"/><circle cx="770.1" cy="288.5" r="3.65"/><circle cx="790.4" cy="288.5" r="3.65"/><circle cx="810.7" cy="288.5" r="3.65"/><circle cx="830.9" cy="288.5" r="3.65"/><circle cx="851.2" cy="288.5" r="3.65"/></g><text transform="translate(688 145.5) rotate(-90)" text-anchor="middle" font-size="13.5" fill="#3366ff" font-family="DejaVu Sans,sans-serif">8</text><text transform="translate(688 165.9) rotate(-90)" text-anchor="middle" font-size="13.5" fill="#3366ff" font-family="DejaVu Sans,sans-serif">7</text><text transform="translate(688 186.4) rotate(-90)" text-anchor="middle" font-size="13.5" fill="#3366ff" font-family="DejaVu Sans,sans-serif">6</text><text transform="translate(688 206.8) rotate(-90)" text-anchor="middle" font-size="13.5" fill="#3366ff" font-family="DejaVu Sans,sans-serif">5</text><text transform="translate(688 227.2) rotate(-90)" text-anchor="middle" font-size="13.5" fill="#3366ff" font-family="DejaVu Sans,sans-serif">4</text><text transform="translate(688 247.7) rotate(-90)" text-anchor="middle" font-size="13.5" fill="#3366ff" font-family="DejaVu Sans,sans-serif">3</text><text transform="translate(688 268.1) rotate(-90)" text-anchor="middle" font-size="13.5" fill="#3366ff" font-family="DejaVu Sans,sans-serif">2</text><text transform="translate(688 288.5) rotate(-90)" text-anchor="middle" font-size="13.5" fill="#3366ff" font-family="DejaVu Sans,sans-serif">1</text><text transform="translate(708.2 333.5) rotate(-90)" text-anchor="middle" font-size="13" fill="#3366ff" font-family="DejaVu Sans,sans-serif">A</text><text transform="translate(728.5 333.5) rotate(-90)" text-anchor="middle" font-size="13" fill="#3366ff" font-family="DejaVu Sans,sans-serif">B</text><text transform="translate(748.8 333.5) rotate(-90)" text-anchor="middle" font-size="13" fill="#3366ff" font-family="DejaVu Sans,sans-serif">C</text><text transform="translate(769.1 333.5) rotate(-90)" text-anchor="middle" font-size="13" fill="#3366ff" font-family="DejaVu Sans,sans-serif">D</text><text transform="translate(789.4 333.5) rotate(-90)" text-anchor="middle" font-size="13" fill="#3366ff" font-family="DejaVu Sans,sans-serif">E</text><text transform="translate(809.7 333.5) rotate(-90)" text-anchor="middle" font-size="13" fill="#3366ff" font-family="DejaVu Sans,sans-serif">F</text><text transform="translate(829.9 333.5) rotate(-90)" text-anchor="middle" font-size="13" fill="#3366ff" font-family="DejaVu Sans,sans-serif">G</text><text transform="translate(850.2 333.5) rotate(-90)" text-anchor="middle" font-size="13" fill="#3366ff" font-family="DejaVu Sans,sans-serif">H</text><rect x="606" y="207.9" width="8.3" height="13" rx="3.6" fill="#ffee80"/><rect x="623.7" y="207.9" width="8.3" height="13" rx="3.6" fill="#ffee80"/><rect x="606" y="190" width="8.3" height="14" rx="3.6" fill="#3366ff"/><rect x="623.7" y="190" width="8.3" height="14" rx="3.6" fill="#3366ff"/><rect x="607.5" y="190.5" width="23" height="12" fill="none" stroke="#33cc33" stroke-width="1"/><rect x="606" y="220.3" width="8.3" height="14" rx="3.6" fill="#3366ff"/><rect x="623.7" y="220.3" width="8.3" height="14" rx="3.6" fill="#3366ff"/><rect x="607.5" y="221.5" width="23" height="12" fill="none" stroke="#33cc33" stroke-width="1"/><rect x="606" y="250.7" width="8.3" height="14" rx="3.6" fill="#3366ff"/><rect x="623.7" y="250.7" width="8.3" height="14" rx="3.6" fill="#3366ff"/><rect x="607.5" y="251.5" width="23" height="12" fill="none" stroke="#33cc33" stroke-width="1"/><rect x="606" y="281.2" width="8.3" height="14" rx="3.6" fill="#3366ff"/><rect x="623.7" y="281.2" width="8.3" height="14" rx="3.6" fill="#3366ff"/><rect x="607.5" y="282.5" width="23" height="12" fill="none" stroke="#33cc33" stroke-width="1"/><rect x="911.5" y="142.9" width="8.3" height="14" rx="3.6" fill="#3366ff"/><rect x="929.2" y="142.9" width="8.3" height="14" rx="3.6" fill="#3366ff"/><rect x="912.5" y="143.5" width="23" height="12" fill="none" stroke="#33cc33" stroke-width="1"/><rect x="911.5" y="173" width="8.3" height="14" rx="3.6" fill="#3366ff"/><rect x="929.2" y="173" width="8.3" height="14" rx="3.6" fill="#3366ff"/><rect x="912.5" y="174.5" width="23" height="12" fill="none" stroke="#33cc33" stroke-width="1"/><rect x="911.5" y="204" width="8.3" height="14" rx="3.6" fill="#3366ff"/><rect x="929.2" y="204" width="8.3" height="14" rx="3.6" fill="#3366ff"/><rect x="912.5" y="204.5" width="23" height="12" fill="none" stroke="#33cc33" stroke-width="1"/><rect x="911.5" y="234.5" width="8.3" height="14" rx="3.6" fill="#3366ff"/><rect x="929.2" y="234.5" width="8.3" height="14" rx="3.6" fill="#3366ff"/><rect x="912.5" y="235.5" width="23" height="12" fill="none" stroke="#33cc33" stroke-width="1"/><rect x="911.5" y="265" width="8.3" height="14" rx="3.6" fill="#3366ff"/><rect x="929.2" y="265" width="8.3" height="14" rx="3.6" fill="#3366ff"/><rect x="912.5" y="266.5" width="23" height="12" fill="none" stroke="#33cc33" stroke-width="1"/><rect x="911.5" y="295.9" width="8.3" height="14" rx="3.6" fill="#3366ff"/><rect x="929.2" y="295.9" width="8.3" height="14" rx="3.6" fill="#3366ff"/><rect x="912.5" y="296.5" width="23" height="12" fill="none" stroke="#33cc33" stroke-width="1"/><rect x="703.7" y="373" width="14" height="8.3" rx="3.6" fill="#3366ff"/><rect x="703.7" y="390.7" width="14" height="8.3" rx="3.6" fill="#3366ff"/><rect x="704.5" y="374.5" width="12" height="23" fill="none" stroke="#33cc33" stroke-width="1"/><rect x="740.7" y="373" width="14" height="8.3" rx="3.6" fill="#3366ff"/><rect x="740.7" y="390.7" width="14" height="8.3" rx="3.6" fill="#3366ff"/><rect x="741.5" y="374.5" width="12" height="23" fill="none" stroke="#33cc33" stroke-width="1"/><rect x="775.2" y="373" width="14" height="8.3" rx="3.6" fill="#3366ff"/><rect x="775.2" y="390.7" width="14" height="8.3" rx="3.6" fill="#3366ff"/><rect x="776.5" y="374.5" width="12" height="23" fill="none" stroke="#33cc33" stroke-width="1"/><text transform="translate(645.8 176.5) rotate(90)" x="-3.3 27.5 54.9" font-size="41.5" font-weight="200" fill="#e060e0" font-family="DejaVu Sans Light,DejaVu Sans,sans-serif">C80</text><rect x="607" y="339.2" width="37" height="33.6" fill="#3366ff"/><rect x="607" y="395.7" width="37" height="34.3" fill="#3366ff"/><rect x="607.5" y="349.5" width="36" height="70" fill="none" stroke="#33cc33" stroke-width="1"/><path d="M603.5 355.5h-4v57h4M647.5 355.5h4v57h-4" fill="none" stroke="#33cc33" stroke-width="2.4"/><text x="625.5" y="361" text-anchor="middle" font-size="11" fill="#fff" font-family="Liberation Sans,sans-serif">1:L</text><text x="625.5" y="417.5" text-anchor="middle" font-size="11" fill="#fff" font-family="Liberation Sans,sans-serif">2:L</text><circle cx="704.4" cy="596.4" r="89" fill="none" stroke="#cc9909" stroke-width="16.6"/><rect x="704" y="596" width="1" height="1" fill="#cc6600"/><rect x="358.5" y="551.5" width="77" height="86" fill="none" stroke="#33cc33" stroke-width="2.4"/><rect x="365" y="558" width="25" height="29" fill="#3366ff"/><text transform="translate(381 572.5) rotate(-90)" text-anchor="middle" font-size="9.5" fill="#fff" font-family="Liberation Sans,sans-serif">2:L</text><rect x="404" y="558" width="25" height="29" fill="#3366ff"/><text transform="translate(420 572.5) rotate(-90)" text-anchor="middle" font-size="9.5" fill="#fff" font-family="Liberation Sans,sans-serif">3:S</text><rect x="365" y="603" width="25" height="29" fill="#3366ff"/><text transform="translate(381 617.5) rotate(-90)" text-anchor="middle" font-size="9.5" fill="#fff" font-family="Liberation Sans,sans-serif">1:S</text><rect x="404" y="603" width="25" height="29" fill="#3366ff"/><text transform="translate(420 617.5) rotate(-90)" text-anchor="middle" font-size="9.5" fill="#fff" font-family="Liberation Sans,sans-serif">4:L</text><rect x="297.6" y="573" width="14" height="8.3" rx="3.6" fill="#3366ff"/><rect x="297.6" y="590.7" width="14" height="8.3" rx="3.6" fill="#3366ff"/><rect x="298.5" y="574.5" width="12" height="23" fill="none" stroke="#33cc33" stroke-width="1"/><rect x="409.9" y="648.8" width="8.3" height="14" rx="3.6" fill="#3366ff"/><rect x="427.6" y="648.8" width="8.3" height="14" rx="3.6" fill="#3366ff"/><rect x="411.5" y="649.5" width="23" height="12" fill="none" stroke="#33cc33" stroke-width="1"/><rect x="452.9" y="654.9" width="8.3" height="14" rx="3.6" fill="#3366ff"/><rect x="470.6" y="654.9" width="8.3" height="14" rx="3.6" fill="#3366ff"/><rect x="454.5" y="655.5" width="23" height="12" fill="none" stroke="#33cc33" stroke-width="1"/><rect x="409.9" y="691.4" width="8.3" height="14" rx="3.6" fill="#3366ff"/><rect x="427.6" y="691.4" width="8.3" height="14" rx="3.6" fill="#3366ff"/><rect x="411.5" y="692.5" width="23" height="12" fill="none" stroke="#33cc33" stroke-width="1"/><rect x="425.8" y="721.8" width="8.3" height="14" rx="3.6" fill="#3366ff"/><rect x="443.5" y="721.8" width="8.3" height="14" rx="3.6" fill="#3366ff"/><rect x="427.5" y="722.5" width="23" height="12" fill="none" stroke="#33cc33" stroke-width="1"/><rect x="315.9" y="769" width="8.3" height="14" rx="3.6" fill="#3366ff"/><rect x="333.6" y="769" width="8.3" height="14" rx="3.6" fill="#3366ff"/><rect x="317.5" y="770.5" width="23" height="12" fill="none" stroke="#33cc33" stroke-width="1"/><rect x="379" y="769" width="8.3" height="14" rx="3.6" fill="#3366ff"/><rect x="396.7" y="769" width="8.3" height="14" rx="3.6" fill="#3366ff"/><rect x="380.5" y="770.5" width="23" height="12" fill="none" stroke="#33cc33" stroke-width="1"/><rect x="491.7" y="762.9" width="8.3" height="14" rx="3.6" fill="#3366ff"/><rect x="509.4" y="762.9" width="8.3" height="14" rx="3.6" fill="#3366ff"/><rect x="493.5" y="763.5" width="23" height="12" fill="none" stroke="#33cc33" stroke-width="1"/><rect x="469.2" y="693.3" width="14" height="8.3" rx="3.6" fill="#3366ff"/><rect x="469.2" y="711" width="14" height="8.3" rx="3.6" fill="#3366ff"/><rect x="470.5" y="694.5" width="12" height="23" fill="none" stroke="#33cc33" stroke-width="1"/><rect x="282" y="879" width="673" height="6" fill="#99ccff"/><rect x="282" y="905" width="673" height="6.5" fill="#ff0000"/></svg>
<div class="abs" style="left:965.5px;top:108px;width:692px;height:830px;background:linear-gradient(#9fb9d8 0,#bcd1e8 28px,#c3d6eb 60px,#bad1ea 100%);border:1px solid #eef4fb;border-right-color:#30d8f4;border-bottom-color:#30d8f4;border-radius:6px 6px 0 0"></div>
<div class="abs" style="left:974px;top:139px;width:675px;height:791px;border:1px solid #76859a;border-right-color:#e4e4e4;border-bottom-color:#e4e4e4;box-shadow:1px 1px 0 #fff"></div>
<svg class="abs" style="left:975px;top:118px" width="16" height="16" viewBox="0 0 16 16"><defs><linearGradient id="lg975_118" x1="0" y1="0" x2="0" y2="1"><stop offset="0" stop-color="#e8384a"/><stop offset="1" stop-color="#b81a2c"/></linearGradient></defs><rect x="0" y="0" width="16" height="16" rx="2" fill="url(#lg975_118)"/><path d="M1 3.5h4.5l4 5H15M1 6h3.5l4 5H15M9 13h6M1 1.5h5" stroke="#fff" stroke-width="1.1" fill="none"/></svg>
<span class="abs" style="left:995px;top:119px;font-size:13px;line-height:16px;color:#000;white-space:nowrap;letter-spacing:-.3px">2:3D View</span>
<div class="abs" style="left:1551px;top:118px;width:30px;height:17px;border:1px solid #5f7698;border-radius:3px;background:linear-gradient(#c9d9ec 0%,#b5cae3 45%,#98b3d3 50%,#a9c1de 100%);box-shadow:inset 0 0 0 1px rgba(255,255,255,.45)"></div><div class="abs" style="left:1584px;top:118px;width:30px;height:17px;border:1px solid #5f7698;border-radius:3px;background:linear-gradient(#c9d9ec 0%,#b5cae3 45%,#98b3d3 50%,#a9c1de 100%);box-shadow:inset 0 0 0 1px rgba(255,255,255,.45)"></div><div class="abs" style="left:1617px;top:118px;width:30px;height:17px;border:1px solid #5b1820;border-radius:3px;background:linear-gradient(#e9b3a6 0%,#dc8470 45%,#c8412a 50%,#d0553a 80%,#da7a5c 100%);box-shadow:inset 0 0 0 1px rgba(255,255,255,.45)"></div><div class="abs" style="left:1561px;top:127px;width:11px;height:4px;background:#f4f4f4;border:1px solid #6a7486;border-radius:1px"></div><div class="abs" style="left:1594px;top:122px;width:10px;height:9px;background:#f4f4f4;border:1px solid #6a7486;border-radius:1px"><div class="abs" style="left:2px;top:2px;width:4px;height:3px;border:1px solid #6a7486;background:#a9c1de"></div></div><svg class="abs" style="left:1626px;top:121px" width="12" height="11" viewBox="0 0 12 11"><path d="M2 2l8 7M10 2l-8 7" stroke="#5a3030" stroke-width="4"/><path d="M2 2l8 7M10 2l-8 7" stroke="#f8f8f8" stroke-width="2.2"/></svg>
<svg class="abs" style="left:975px;top:140px" width="673" height="789" viewBox="975 140 673 789"><defs><linearGradient id="g3" x1="0" y1="0" x2="0" y2="1"><stop offset="0" stop-color="#7a8b77"/><stop offset="1" stop-color="#a6b7a2"/></linearGradient><linearGradient id="gw" x1="0" y1="0" x2="0" y2="1"><stop offset="0" stop-color="#f1f1f1"/><stop offset=".6" stop-color="#fdfdfd"/><stop offset="1" stop-color="#fff"/></linearGradient><linearGradient id="gd" x1="0" y1="0" x2="0" y2="1"><stop offset="0" stop-color="#b7b7b7"/><stop offset="1" stop-color="#d9d9d9"/></linearGradient></defs><rect x="975" y="140" width="673" height="711" fill="url(#g3)"/><rect x="975" y="850.5" width="673" height="79" fill="url(#gw)"/><rect x="975" y="838" width="673" height="1" fill="#74856f"/><rect x="975" y="850" width="673" height="1" fill="#8a9a86"/><rect x="975" y="140" width="9" height="247.5" fill="#5050be"/><rect x="1177" y="140" width="180" height="213.5" fill="#0a0a14"/><rect x="1176.5" y="140" width="179.5" height="212" fill="#5050be"/><rect x="1112.3" y="220.2" width="30" height="18.5" fill="#5050be"/><rect x="1115.3" y="223.45" width="8" height="12" rx="3.6" fill="#ffe878"/><rect x="1131.3" y="223.45" width="8" height="12" rx="3.6" fill="#ffe878"/><rect x="1112.3" y="246.9" width="30" height="18.5" fill="#5050be"/><rect x="1115.3" y="250.15" width="8" height="12" rx="3.6" fill="#ffe878"/><rect x="1131.3" y="250.15" width="8" height="12" rx="3.6" fill="#ffe878"/><rect x="1112.3" y="273.6" width="30" height="18.5" fill="#5050be"/><rect x="1115.3" y="276.85" width="8" height="12" rx="3.6" fill="#ffe878"/><rect x="1131.3" y="276.85" width="8" height="12" rx="3.6" fill="#ffe878"/><rect x="1112.3" y="300.3" width="30" height="18.5" fill="#5050be"/><rect x="1115.3" y="303.55" width="8" height="12" rx="3.6" fill="#ffe878"/><rect x="1131.3" y="303.55" width="8" height="12" rx="3.6" fill="#ffe878"/><rect x="1142" y="248.5" width="7" height="15" fill="#8a90b0" opacity=".55"/><rect x="1143.5" y="250" width="3" height="12" fill="#b8b8a0" opacity=".6"/><rect x="1380" y="178.9" width="30" height="18.5" fill="#5050be"/><rect x="1383" y="182.15" width="8" height="12" rx="3.6" fill="#ffe878"/><rect x="1399" y="182.15" width="8" height="12" rx="3.6" fill="#ffe878"/><rect x="1380" y="205.6" width="30" height="18.5" fill="#5050be"/><rect x="1383" y="208.85" width="8" height="12" rx="3.6" fill="#ffe878"/><rect x="1399" y="208.85" width="8" height="12" rx="3.6" fill="#ffe878"/><rect x="1380" y="232.3" width="30" height="18.5" fill="#5050be"/><rect x="1383" y="235.55" width="8" height="12" rx="3.6" fill="#ffe878"/><rect x="1399" y="235.55" width="8" height="12" rx="3.6" fill="#ffe878"/><rect x="1380" y="259" width="30" height="18.5" fill="#5050be"/><rect x="1383" y="262.25" width="8" height="12" rx="3.6" fill="#ffe878"/><rect x="1399" y="262.25" width="8" height="12" rx="3.6" fill="#ffe878"/><rect x="1380" y="285.7" width="30" height="18.5" fill="#5050be"/><rect x="1383" y="288.95" width="8" height="12" rx="3.6" fill="#ffe878"/><rect x="1399" y="288.95" width="8" height="12" rx="3.6" fill="#ffe878"/><rect x="1380" y="312.4" width="30" height="18.5" fill="#5050be"/><rect x="1383" y="315.65" width="8" height="12" rx="3.6" fill="#ffe878"/><rect x="1399" y="315.65" width="8" height="12" rx="3.6" fill="#ffe878"/><rect x="1113" y="347" width="37" height="90.5" fill="#0a0a14"/><rect x="1112.3" y="346" width="36.5" height="90.2" fill="#5050be"/><rect x="1197.8" y="380" width="19" height="29.5" fill="#5050be"/><rect x="1201.3" y="383" width="12" height="8" rx="3.6" fill="#ffe878"/><rect x="1201.3" y="398.5" width="12" height="8" rx="3.6" fill="#ffe878"/><rect x="1229.8" y="380" width="19" height="29.5" fill="#5050be"/><rect x="1233.3" y="383" width="12" height="8" rx="3.6" fill="#ffe878"/><rect x="1233.3" y="398.5" width="12" height="8" rx="3.6" fill="#ffe878"/><rect x="1259.8" y="380" width="19" height="29.5" fill="#5050be"/><rect x="1263.3" y="383" width="12" height="8" rx="3.6" fill="#ffe878"/><rect x="1263.3" y="398.5" width="12" height="8" rx="3.6" fill="#ffe878"/><rect x="1526" y="140" width="122" height="605" fill="#5050be"/><g fill="#ffe878"><circle cx="1542.2" cy="150.4" r="5.75"/><circle cx="1564.9" cy="150.4" r="5.75"/><circle cx="1587.7" cy="150.4" r="5.75"/><circle cx="1610.4" cy="150.4" r="5.75"/><circle cx="1633.1" cy="150.4" r="5.75"/><circle cx="1542.2" cy="173.0" r="5.75"/><circle cx="1564.9" cy="173.0" r="5.75"/><circle cx="1587.7" cy="173.0" r="5.75"/><circle cx="1610.4" cy="173.0" r="5.75"/><circle cx="1633.1" cy="173.0" r="5.75"/><circle cx="1542.2" cy="195.6" r="5.75"/><circle cx="1564.9" cy="195.6" r="5.75"/><circle cx="1587.7" cy="195.6" r="5.75"/><circle cx="1610.4" cy="195.6" r="5.75"/><circle cx="1633.1" cy="195.6" r="5.75"/><circle cx="1542.2" cy="218.2" r="5.75"/><circle cx="1564.9" cy="218.2" r="5.75"/><circle cx="1587.7" cy="218.2" r="5.75"/><circle cx="1610.4" cy="218.2" r="5.75"/><circle cx="1633.1" cy="218.2" r="5.75"/><circle cx="1542.2" cy="240.9" r="5.75"/><circle cx="1564.9" cy="240.9" r="5.75"/><circle cx="1587.7" cy="240.9" r="5.75"/><circle cx="1610.4" cy="240.9" r="5.75"/><circle cx="1633.1" cy="240.9" r="5.75"/><circle cx="1542.2" cy="263.5" r="5.75"/><circle cx="1564.9" cy="263.5" r="5.75"/><circle cx="1587.7" cy="263.5" r="5.75"/><circle cx="1610.4" cy="263.5" r="5.75"/><circle cx="1633.1" cy="263.5" r="5.75"/><circle cx="1542.2" cy="286.1" r="5.75"/><circle cx="1564.9" cy="286.1" r="5.75"/><circle cx="1587.7" cy="286.1" r="5.75"/><circle cx="1610.4" cy="286.1" r="5.75"/><circle cx="1633.1" cy="286.1" r="5.75"/><circle cx="1542.2" cy="308.7" r="5.75"/><circle cx="1564.9" cy="308.7" r="5.75"/><circle cx="1587.7" cy="308.7" r="5.75"/><circle cx="1610.4" cy="308.7" r="5.75"/><circle cx="1633.1" cy="308.7" r="5.75"/><circle cx="1542.2" cy="331.3" r="5.75"/><circle cx="1564.9" cy="331.3" r="5.75"/><circle cx="1587.7" cy="331.3" r="5.75"/><circle cx="1610.4" cy="331.3" r="5.75"/><circle cx="1633.1" cy="331.3" r="5.75"/><circle cx="1542.2" cy="353.9" r="5.75"/><circle cx="1564.9" cy="353.9" r="5.75"/><circle cx="1587.7" cy="353.9" r="5.75"/><circle cx="1610.4" cy="353.9" r="5.75"/><circle cx="1633.1" cy="353.9" r="5.75"/><circle cx="1542.2" cy="376.5" r="5.75"/><circle cx="1564.9" cy="376.5" r="5.75"/><circle cx="1587.7" cy="376.5" r="5.75"/><circle cx="1610.4" cy="376.5" r="5.75"/><circle cx="1633.1" cy="376.5" r="5.75"/><circle cx="1542.2" cy="399.2" r="5.75"/><circle cx="1564.9" cy="399.2" r="5.75"/><circle cx="1587.7" cy="399.2" r="5.75"/><circle cx="1610.4" cy="399.2" r="5.75"/><circle cx="1633.1" cy="399.2" r="5.75"/><circle cx="1542.2" cy="421.8" r="5.75"/><circle cx="1564.9" cy="421.8" r="5.75"/><circle cx="1587.7" cy="421.8" r="5.75"/><circle cx="1610.4" cy="421.8" r="5.75"/><circle cx="1633.1" cy="421.8" r="5.75"/><circle cx="1542.2" cy="444.4" r="5.75"/><circle cx="1564.9" cy="444.4" r="5.75"/><circle cx="1587.7" cy="444.4" r="5.75"/><circle cx="1610.4" cy="444.4" r="5.75"/><circle cx="1633.1" cy="444.4" r="5.75"/><circle cx="1542.2" cy="467.0" r="5.75"/><circle cx="1564.9" cy="467.0" r="5.75"/><circle cx="1587.7" cy="467.0" r="5.75"/><circle cx="1610.4" cy="467.0" r="5.75"/><circle cx="1633.1" cy="467.0" r="5.75"/><circle cx="1542.2" cy="489.6" r="5.75"/><circle cx="1564.9" cy="489.6" r="5.75"/><circle cx="1587.7" cy="489.6" r="5.75"/><circle cx="1610.4" cy="489.6" r="5.75"/><circle cx="1633.1" cy="489.6" r="5.75"/><circle cx="1542.2" cy="512.2" r="5.75"/><circle cx="1564.9" cy="512.2" r="5.75"/><circle cx="1587.7" cy="512.2" r="5.75"/><circle cx="1610.4" cy="512.2" r="5.75"/><circle cx="1633.1" cy="512.2" r="5.75"/><circle cx="1542.2" cy="534.9" r="5.75"/><circle cx="1564.9" cy="534.9" r="5.75"/><circle cx="1587.7" cy="534.9" r="5.75"/><circle cx="1610.4" cy="534.9" r="5.75"/><circle cx="1633.1" cy="534.9" r="5.75"/><circle cx="1542.2" cy="557.5" r="5.75"/><circle cx="1564.9" cy="557.5" r="5.75"/><circle cx="1587.7" cy="557.5" r="5.75"/><circle cx="1610.4" cy="557.5" r="5.75"/><circle cx="1633.1" cy="557.5" r="5.75"/><circle cx="1542.2" cy="580.1" r="5.75"/><circle cx="1564.9" cy="580.1" r="5.75"/><circle cx="1587.7" cy="580.1" r="5.75"/><circle cx="1610.4" cy="580.1" r="5.75"/><circle cx="1633.1" cy="580.1" r="5.75"/><circle cx="1608" cy="700.3" r="28"/></g><ellipse cx="1202.25" cy="578.15" rx="85.3" ry="83.9" fill="#566657"/><ellipse cx="1202.25" cy="578.15" rx="84.8" ry="83.4" fill="none" stroke="#6f806c" stroke-width="1"/><circle cx="1205.3" cy="576.5" r="80.8" fill="url(#gd)"/><rect x="979.2" y="626.3" width="30" height="18.5" fill="#5050be"/><rect x="982.2" y="629.55" width="8" height="12" rx="3.6" fill="#ffe878"/><rect x="998.2" y="629.55" width="8" height="12" rx="3.6" fill="#ffe878"/><rect x="993.2" y="660" width="19" height="28.5" fill="#5050be"/><rect x="996.7" y="663" width="12" height="8" rx="3.6" fill="#ffe878"/><rect x="996.7" y="677.5" width="12" height="8" rx="3.6" fill="#ffe878"/><rect x="975" y="684.8" width="10" height="18.7" fill="#5050be"/><ellipse cx="979" cy="694" rx="4" ry="6" fill="#ffe878"/><rect x="1012.8" y="720.3" width="29.5" height="18.7" fill="#5050be"/><rect x="1015.8" y="723.65" width="8" height="12" rx="3.6" fill="#ffe878"/><rect x="1031.3" y="723.65" width="8" height="12" rx="3.6" fill="#ffe878"/><defs><linearGradient id="gy" x1="0" y1="0" x2="1" y2="0"><stop offset="0" stop-color="#0a8a0a"/><stop offset=".4" stop-color="#70ff70"/><stop offset="1" stop-color="#0a7a0a"/></linearGradient><linearGradient id="gx" x1="0" y1="0" x2="0" y2="1"><stop offset="0" stop-color="#1010a0"/><stop offset=".4" stop-color="#2828ff"/><stop offset="1" stop-color="#0a0a90"/></linearGradient><radialGradient id="gr" cx=".4" cy=".35" r=".7"><stop offset="0" stop-color="#ff5050"/><stop offset="1" stop-color="#d00808"/></radialGradient></defs><rect x="1035.3" y="833.5" width="6.7" height="29" fill="url(#gy)"/><path d="M1032.7 834.2l5.700-6.400 5.800 6.400z" fill="#0a7a0a"/><rect x="1040" y="863" width="30.5" height="5.8" fill="url(#gx)"/><path d="M1070 860l6.300 6-6.300 6z" fill="#000060"/><circle cx="1038.2" cy="865.900" r="6.300" fill="url(#gr)"/><text x="1034.6" y="822" font-size="18" fill="#18f018" font-family="Liberation Sans,sans-serif" textLength="7.8" lengthAdjust="spacingAndGlyphs">Y</text><text x="1079" y="866" font-size="18" fill="#1010f0" font-family="Liberation Sans,sans-serif" textLength="7.6" lengthAdjust="spacingAndGlyphs">X</text><text x="1035.8" y="866.3" font-size="17" fill="#f01010" font-family="DejaVu Sans Light,DejaVu Sans,sans-serif" font-weight="200" textLength="6" lengthAdjust="spacingAndGlyphs">Z</text></svg>
<svg class="abs" style="left:265px;top:943px" width="220" height="26" viewBox="0 0 220 26"><path d="M19 1h96v20q0 2-2 2H50q-3 0-5-2z" fill="#fdf1c6"/><path d="M115 2h81q2 0 2 2v16q0 2-2 2H119l-4-3z" fill="#aec8ea"/><path d="M115 22h82" stroke="#d4e2f4" stroke-width="1"/><path d="M12 8.5v9l-5-4.5z" fill="none" stroke="#c8d4e8" stroke-width="1"/></svg>
<svg class="abs" style="left:305px;top:947px" width="16" height="16" viewBox="0 0 16 16"><defs><linearGradient id="lg305_947" x1="0" y1="0" x2="0" y2="1"><stop offset="0" stop-color="#e8384a"/><stop offset="1" stop-color="#b81a2c"/></linearGradient></defs><rect x="0" y="0" width="16" height="16" rx="2" fill="url(#lg305_947)"/><path d="M1 3.5h4.5l4 5H15M1 6h3.5l4 5H15M9 13h6M1 1.5h5" stroke="#fff" stroke-width="1.1" fill="none"/></svg>
<span class="abs" style="left:326px;top:947px;font-size:11.5px;font-weight:bold;line-height:16px;white-space:nowrap;letter-spacing:-.45px">2:3D View</span>
<svg class="abs" style="left:388px;top:947px" width="16" height="16" viewBox="0 0 16 16"><defs><linearGradient id="lg388_947" x1="0" y1="0" x2="0" y2="1"><stop offset="0" stop-color="#e8384a"/><stop offset="1" stop-color="#b81a2c"/></linearGradient></defs><rect x="0" y="0" width="16" height="16" rx="2" fill="url(#lg388_947)"/><path d="M1 3.5h4.5l4 5H15M1 6h3.5l4 5H15M9 13h6M1 1.5h5" stroke="#fff" stroke-width="1.1" fill="none"/></svg>
<span class="abs" style="left:406px;top:947px;font-size:11.5px;line-height:16px;white-space:nowrap;letter-spacing:-.35px">1:Kintex_7</span>
<svg class="abs" style="left:1645px;top:950px" width="10" height="12" viewBox="0 0 10 12"><path d="M2.5 1.5v9l5-4.5z" fill="none" stroke="#c8d4e8" stroke-width="1"/></svg>
<div class="abs" style="left:1670px;top:101px;width:250px;height:867px;background:#f0f0f0"></div>
<div class="abs" style="left:1670px;top:101px;width:250px;height:22px;background:linear-gradient(#4d5f85,#475a80 60%,#43557b)"><span class="abs" style="left:4px;top:3px;color:#fff;font-size:12px;line-height:17px;white-space:nowrap;text-shadow:0 0 1px rgba(255,255,255,.35)">显示控制 <span style="font-size:11.5px;letter-spacing:-.45px">- 1:Kintex_7</span></span></div>
<svg class="abs" style="left:1871px;top:107px" width="46" height="11" viewBox="0 0 46 11"><path d="M1 2.5h9L5.5 7.5z" fill="#e8ecf4"/><path d="M20.5 1.5h4v5h-4zM19 6.5h7M22.5 6.5v4" fill="none" stroke="#e8ecf4" stroke-width="1.2"/><path d="M24 1.5v5" stroke="#e8ecf4" stroke-width="1.5"/><path d="M35.5 1.5l7.5 8M43 1.5l-7.5 8" stroke="#e8ecf4" stroke-width="1.5"/></svg>
<div class="abs" style="left:1673px;top:126px;width:34px;height:19px;border-right:1px solid #8a8a8a;border-top:1px solid #e0e0e0;border-radius:2px 2px 0 0"></div>
<span class="abs" style="left:1677px;top:129px;font-size:12.5px;line-height:16px;white-space:nowrap;letter-spacing:-.3px">编辑</span>
<div class="abs" style="left:1707px;top:126px;width:36px;height:19px;border-right:1px solid #8a8a8a;border-top:1px solid #e0e0e0;border-radius:2px 2px 0 0"></div>
<span class="abs" style="left:1711px;top:129px;font-size:12.5px;line-height:16px;white-space:nowrap;letter-spacing:-.3px">对象</span>
<div class="abs" style="left:1743px;top:126px;width:35px;height:19px;border-right:1px solid #8a8a8a;border-top:1px solid #e0e0e0;border-radius:2px 2px 0 0"></div>
<span class="abs" style="left:1747px;top:129px;font-size:12.5px;line-height:16px;white-space:nowrap;letter-spacing:-.3px">图形</span>
<div class="abs" style="left:1777px;top:123px;width:40px;height:23px;background:#f4f4f4;border:1px solid #8a8a8a;border-bottom:none;border-right:2px solid #666;border-radius:2px 2px 0 0"></div>
<span class="abs" style="left:1785px;top:126px;font-size:12.5px;line-height:16px;white-space:nowrap">制造</span>
<div class="abs" style="left:1817px;top:126px;width:31px;height:19px;border-right:1px solid #8a8a8a;border-top:1px solid #e0e0e0;border-radius:2px 2px 0 0"></div>
<span class="abs" style="left:1821px;top:129px;font-size:11px;line-height:16px;white-space:nowrap;letter-spacing:-.3px">DRC</span>
<div class="abs" style="left:1848px;top:126px;width:26px;height:19px;border-right:1px solid #8a8a8a;border-top:1px solid #e0e0e0;border-radius:2px 2px 0 0"></div>
<span class="abs" style="left:1852px;top:129px;font-size:11px;line-height:16px;white-space:nowrap;letter-spacing:-.3px">3D</span>
<div class="abs" style="left:1672px;top:145px;width:246px;height:1px;background:#fff"></div>
<svg class="abs" style="left:1674px;top:148px" width="246" height="18" viewBox="1674 148 246 18"><path d="M1682 149v13M1675.5 155.5h13" stroke="#8e9cc8" stroke-width="4"/><path d="M1681.5 149.500v11.500M1676 155h11.500" stroke="#dfe5f8" stroke-width="2.200"/><path d="M1694 156h12" stroke="#8e9cc8" stroke-width="4"/><path d="M1694.500 155.500h10.500" stroke="#dfe5f8" stroke-width="2.200"/><path d="M1842.5 150l5 6h-3v6h-4v-6h-3z" fill="#f4f4f4" stroke="#8a8a8a" stroke-width="1"/><path d="M1864 162l-5-5h3v-3c0-2 1-3 4-4v2c-1 0-1 1-1 2v3h3z" fill="#f4f4f4" stroke="#8a8a8a" stroke-width="1"/><path d="M1886.5 149l7 6.5-7 6.5-7-6.5z" fill="#dfe8f8" stroke="#7a9ad8" stroke-width="1.2"/><path d="M1886.5 152l3.5 3.5-3.5 3.5-3.5-3.5z" fill="#f07020"/><path d="M1901 158l8-8.5 8 4-8 8.5z" fill="#7a18a8" stroke="#3a0a58" stroke-width=".8"/><path d="M1901 158l8 4v2.5l-8-4z" fill="#e8e0f0" stroke="#3a0a58" stroke-width=".6"/><path d="M1909 162l8-8.5v2.5l-8 8.5z" fill="#5a1088"/><text x="1906.5" y="159" font-size="8" font-weight="bold" fill="#f8e020" font-family="Liberation Sans,sans-serif">?</text></svg>
<div class="abs" style="left:1672px;top:167px;width:246px;height:2px;border-top:1px solid #a8a8a8;border-bottom:1px solid #fff"></div>
<div class="abs" style="left:1672px;top:170.5px;width:230px;height:21px;background:linear-gradient(#fbfbfb,#ececec 45%,#d6d6d6);border-top:1px solid #c8c8c8;border-bottom:1px solid #bdbdbd"></div><svg class="abs" style="left:1677px;top:175.5px" width="11" height="10" viewBox="0 0 11 10"><path d="M.8 .8h9.4L5.5 9z" fill="#dfe8f8" stroke="#5a7ab8" stroke-width="1"/></svg><div class="abs" style="left:1694px;top:173.5px;width:13px;height:13px;border:1px solid #8e8f8f;background:linear-gradient(135deg,#dcdcdc,#f4f4f4 60%,#fff);box-shadow:inset 0 0 0 1px #f4f4f4"></div><svg class="abs" style="left:1696px;top:175.5px" width="9" height="9" viewBox="0 0 9 9"><path d="M1 4l2.2 3L7.8 .8" fill="none" stroke="#3a4a9a" stroke-width="1.7"/></svg><span class="abs" style="left:1711px;top:173.0px;font-size:12px;line-height:16px;white-space:nowrap">板对象</span>
<div class="abs" style="left:1677px;top:196px;width:10px;height:10px;border:1px solid #8a9ab5;border-radius:2px;background:linear-gradient(#fff,#dde3ee)"><div class="abs" style="left:1.5px;top:3.5px;width:5px;height:1.5px;background:#2a3a8a"></div></div><div class="abs" style="left:1694px;top:194px;width:13px;height:13px;border:1px solid #8e8f8f;background:linear-gradient(135deg,#dcdcdc,#f4f4f4 60%,#fff);box-shadow:inset 0 0 0 1px #f4f4f4"></div><svg class="abs" style="left:1696px;top:196px" width="9" height="9" viewBox="0 0 9 9"><path d="M1 4l2.2 3L7.8 .8" fill="none" stroke="#3a4a9a" stroke-width="1.7"/></svg><span class="abs" style="left:1711px;top:193.5px;font-size:12px;line-height:16px;white-space:nowrap">光学点</span>
<div class="abs" style="left:1694px;top:211px;width:13px;height:12px;background:#00ffff;border-right:1px solid #555;border-bottom:1px solid #555;box-shadow:1px 1px 0 #a0a0a0"></div>
<div class="abs" style="left:1712px;top:210px;width:13px;height:13px;border:1px solid #8e8f8f;background:linear-gradient(135deg,#dcdcdc,#f4f4f4 60%,#fff);box-shadow:inset 0 0 0 1px #f4f4f4"></div><svg class="abs" style="left:1714px;top:212px" width="9" height="9" viewBox="0 0 9 9"><path d="M1 4l2.2 3L7.8 .8" fill="none" stroke="#3a4a9a" stroke-width="1.7"/></svg><span class="abs" style="left:1729px;top:209.5px;font-size:12px;line-height:16px;white-space:nowrap">顶面</span>
<div class="abs" style="left:1694px;top:227px;width:13px;height:12px;background:#ffccff;border-right:1px solid #555;border-bottom:1px solid #555;box-shadow:1px 1px 0 #a0a0a0"></div>
<div class="abs" style="left:1712px;top:226px;width:13px;height:13px;border:1px solid #8e8f8f;background:linear-gradient(135deg,#dcdcdc,#f4f4f4 60%,#fff);box-shadow:inset 0 0 0 1px #f4f4f4"></div><svg class="abs" style="left:1714px;top:228px" width="9" height="9" viewBox="0 0 9 9"><path d="M1 4l2.2 3L7.8 .8" fill="none" stroke="#3a4a9a" stroke-width="1.7"/></svg><span class="abs" style="left:1729px;top:225.5px;font-size:12px;line-height:16px;white-space:nowrap">底面</span>
<div class="abs" style="left:1677px;top:244px;width:10px;height:10px;border:1px solid #8a9ab5;border-radius:2px;background:linear-gradient(#fff,#dde3ee)"><div class="abs" style="left:1.5px;top:3.5px;width:5px;height:1.5px;background:#2a3a8a"></div></div><div class="abs" style="left:1694px;top:242px;width:13px;height:13px;border:1px solid #8e8f8f;background:linear-gradient(135deg,#dcdcdc,#f4f4f4 60%,#fff);box-shadow:inset 0 0 0 1px #f4f4f4"></div><svg class="abs" style="left:1696px;top:244px" width="9" height="9" viewBox="0 0 9 9"><path d="M1 4l2.2 3L7.8 .8" fill="none" stroke="#3a4a9a" stroke-width="1.7"/></svg><span class="abs" style="left:1711px;top:241.5px;font-size:12px;line-height:16px;white-space:nowrap">贴装孔</span>
<div class="abs" style="left:1712px;top:258px;width:13px;height:13px;border:1px solid #8e8f8f;background:linear-gradient(135deg,#dcdcdc,#f4f4f4 60%,#fff);box-shadow:inset 0 0 0 1px #f4f4f4"></div><svg class="abs" style="left:1714px;top:260px" width="9" height="9" viewBox="0 0 9 9"><path d="M1 4l2.2 3L7.8 .8" fill="none" stroke="#3a4a9a" stroke-width="1.7"/></svg><span class="abs" style="left:1729px;top:257.5px;font-size:12px;line-height:16px;white-space:nowrap">焊盘</span>
<div class="abs" style="left:1694px;top:275px;width:13px;height:12px;background:#cc9900;border-right:1px solid #555;border-bottom:1px solid #555;box-shadow:1px 1px 0 #a0a0a0"></div>
<div class="abs" style="left:1712px;top:274px;width:13px;height:13px;border:1px solid #8e8f8f;background:linear-gradient(135deg,#dcdcdc,#f4f4f4 60%,#fff);box-shadow:inset 0 0 0 1px #f4f4f4"></div><svg class="abs" style="left:1714px;top:276px" width="9" height="9" viewBox="0 0 9 9"><path d="M1 4l2.2 3L7.8 .8" fill="none" stroke="#3a4a9a" stroke-width="1.7"/></svg><span class="abs" style="left:1729px;top:273.5px;font-size:12px;line-height:16px;white-space:nowrap">孔</span>
<div class="abs" style="left:1677px;top:292px;width:10px;height:10px;border:1px solid #8a9ab5;border-radius:2px;background:linear-gradient(#fff,#dde3ee)"><div class="abs" style="left:1.5px;top:3.5px;width:5px;height:1.5px;background:#2a3a8a"></div></div><div class="abs" style="left:1694px;top:290px;width:13px;height:13px;border:1px solid #8e8f8f;background:linear-gradient(135deg,#dcdcdc,#f4f4f4 60%,#fff);box-shadow:inset 0 0 0 1px #f4f4f4"></div><svg class="abs" style="left:1696px;top:292px" width="9" height="9" viewBox="0 0 9 9"><path d="M1 4l2.2 3L7.8 .8" fill="none" stroke="#3a4a9a" stroke-width="1.7"/></svg><span class="abs" style="left:1711px;top:289.5px;font-size:12px;line-height:16px;white-space:nowrap">板元素</span>
<div class="abs" style="left:1694px;top:307px;width:13px;height:12px;background:#ff0000;border-right:1px solid #555;border-bottom:1px solid #555;box-shadow:1px 1px 0 #a0a0a0"></div>
<div class="abs" style="left:1712px;top:306px;width:13px;height:13px;border:1px solid #8e8f8f;background:linear-gradient(135deg,#dcdcdc,#f4f4f4 60%,#fff);box-shadow:inset 0 0 0 1px #f4f4f4"></div><svg class="abs" style="left:1714px;top:308px" width="9" height="9" viewBox="0 0 9 9"><path d="M1 4l2.2 3L7.8 .8" fill="none" stroke="#3a4a9a" stroke-width="1.7"/></svg><span class="abs" style="left:1729px;top:305.5px;font-size:12px;line-height:16px;white-space:nowrap">板框</span>
<div class="abs" style="left:1694px;top:323px;width:13px;height:12px;background:#660066;border-right:1px solid #555;border-bottom:1px solid #555;box-shadow:1px 1px 0 #a0a0a0"></div>
<div class="abs" style="left:1712px;top:322px;width:13px;height:13px;border:1px solid #8e8f8f;background:linear-gradient(135deg,#dcdcdc,#f4f4f4 60%,#fff);box-shadow:inset 0 0 0 1px #f4f4f4"></div><svg class="abs" style="left:1714px;top:324px" width="9" height="9" viewBox="0 0 9 9"><path d="M1 4l2.2 3L7.8 .8" fill="none" stroke="#3a4a9a" stroke-width="1.7"/></svg><span class="abs" style="left:1729px;top:321.5px;font-size:12px;line-height:16px;white-space:nowrap">制造边框</span>
<div class="abs" style="left:1694px;top:339px;width:13px;height:12px;background:#000080;border-right:1px solid #555;border-bottom:1px solid #555;box-shadow:1px 1px 0 #a0a0a0"></div>
<div class="abs" style="left:1712px;top:338px;width:13px;height:13px;border:1px solid #8e8f8f;background:linear-gradient(135deg,#dcdcdc,#f4f4f4 60%,#fff);box-shadow:inset 0 0 0 1px #f4f4f4"></div><svg class="abs" style="left:1714px;top:340px" width="9" height="9" viewBox="0 0 9 9"><path d="M1 4l2.2 3L7.8 .8" fill="none" stroke="#3a4a9a" stroke-width="1.7"/></svg><span class="abs" style="left:1729px;top:337.5px;font-size:12px;line-height:16px;white-space:nowrap">测试夹具边框</span>
<div class="abs" style="left:1694px;top:355px;width:13px;height:12px;background:#660066;border-right:1px solid #555;border-bottom:1px solid #555;box-shadow:1px 1px 0 #a0a0a0"></div>
<div class="abs" style="left:1712px;top:354px;width:13px;height:13px;border:1px solid #8e8f8f;background:linear-gradient(135deg,#dcdcdc,#f4f4f4 60%,#fff);box-shadow:inset 0 0 0 1px #f4f4f4"></div><svg class="abs" style="left:1714px;top:356px" width="9" height="9" viewBox="0 0 9 9"><path d="M1 4l2.2 3L7.8 .8" fill="none" stroke="#3a4a9a" stroke-width="1.7"/></svg><span class="abs" style="left:1729px;top:353.5px;font-size:12px;line-height:16px;white-space:nowrap">腔体</span>
<div class="abs" style="left:1694px;top:371px;width:13px;height:12px;background:#cc9900;border-right:1px solid #555;border-bottom:1px solid #555;box-shadow:1px 1px 0 #a0a0a0"></div>
<div class="abs" style="left:1712px;top:370px;width:13px;height:13px;border:1px solid #8e8f8f;background:linear-gradient(135deg,#dcdcdc,#f4f4f4 60%,#fff);box-shadow:inset 0 0 0 1px #f4f4f4"></div><svg class="abs" style="left:1714px;top:372px" width="9" height="9" viewBox="0 0 9 9"><path d="M1 4l2.2 3L7.8 .8" fill="none" stroke="#3a4a9a" stroke-width="1.7"/></svg><span class="abs" style="left:1729px;top:369.5px;font-size:12px;line-height:16px;white-space:nowrap">轮廓</span>
<div class="abs" style="left:1713px;top:387px;width:13px;height:12px;background:#ffffff;border-right:1px solid #555;border-bottom:1px solid #555;box-shadow:1px 1px 0 #a0a0a0"></div><div class="abs" style="left:1731px;top:386px;width:13px;height:13px;border:1px solid #8e8f8f;background:linear-gradient(135deg,#dcdcdc,#f4f4f4 60%,#fff);box-shadow:inset 0 0 0 1px #f4f4f4"></div><svg class="abs" style="left:1733px;top:388px" width="9" height="9" viewBox="0 0 9 9"><path d="M1 4l2.2 3L7.8 .8" fill="none" stroke="#3a4a9a" stroke-width="1.7"/></svg><span class="abs" style="left:1747px;top:385.5px;font-size:12px;line-height:16px;white-space:nowrap">穿越编号</span>
<div class="abs" style="left:1694px;top:403px;width:13px;height:12px;background:#9966ff;border-right:1px solid #555;border-bottom:1px solid #555;box-shadow:1px 1px 0 #a0a0a0"></div>
<div class="abs" style="left:1712px;top:402px;width:13px;height:13px;border:1px solid #8e8f8f;background:linear-gradient(135deg,#dcdcdc,#f4f4f4 60%,#fff);box-shadow:inset 0 0 0 1px #f4f4f4"></div><span class="abs" style="left:1729px;top:401.5px;font-size:12px;line-height:16px;white-space:nowrap">DRC 窗口</span>
<div class="abs" style="left:1694px;top:419px;width:13px;height:12px;background:#ffffff;border-right:1px solid #555;border-bottom:1px solid #555;box-shadow:1px 1px 0 #a0a0a0"></div>
<div class="abs" style="left:1712px;top:418px;width:13px;height:13px;border:1px solid #8e8f8f;background:linear-gradient(135deg,#dcdcdc,#f4f4f4 60%,#fff);box-shadow:inset 0 0 0 1px #f4f4f4"></div><span class="abs" style="left:1729px;top:417.5px;font-size:12px;line-height:16px;white-space:nowrap">板原点</span>
<div class="abs" style="left:1694px;top:435px;width:13px;height:12px;background:#ffffff;border-right:1px solid #555;border-bottom:1px solid #555;box-shadow:1px 1px 0 #a0a0a0"></div>
<div class="abs" style="left:1712px;top:434px;width:13px;height:13px;border:1px solid #8e8f8f;background:linear-gradient(135deg,#dcdcdc,#f4f4f4 60%,#fff);box-shadow:inset 0 0 0 1px #f4f4f4"></div><span class="abs" style="left:1729px;top:433.5px;font-size:12px;line-height:16px;white-space:nowrap">NC 钻孔原点</span>
<div class="abs" style="left:1694px;top:451px;width:13px;height:12px;background:#ff0000;border-right:1px solid #555;border-bottom:1px solid #555;box-shadow:1px 1px 0 #a0a0a0"></div>
<div class="abs" style="left:1712px;top:450px;width:13px;height:13px;border:1px solid #8e8f8f;background:linear-gradient(135deg,#dcdcdc,#f4f4f4 60%,#fff);box-shadow:inset 0 0 0 1px #f4f4f4"></div><span class="abs" style="left:1729px;top:449.5px;font-size:12px;line-height:16px;white-space:nowrap">红标线层</span>
<div class="abs" style="left:1677px;top:468px;width:10px;height:10px;border:1px solid #8a9ab5;border-radius:2px;background:linear-gradient(#fff,#dde3ee)"><div class="abs" style="left:1.5px;top:3.5px;width:5px;height:1.5px;background:#2a3a8a"></div></div><div class="abs" style="left:1694px;top:466px;width:13px;height:13px;border:1px solid #8e8f8f;background:linear-gradient(135deg,#dcdcdc,#f4f4f4 60%,#fff);box-shadow:inset 0 0 0 1px #f4f4f4"></div><svg class="abs" style="left:1696px;top:468px" width="9" height="9" viewBox="0 0 9 9"><path d="M1 4l2.2 3L7.8 .8" fill="none" stroke="#3a4a9a" stroke-width="1.7"/></svg><span class="abs" style="left:1711px;top:465.5px;font-size:12px;line-height:16px;white-space:nowrap">文本项目</span>
<div class="abs" style="left:1712px;top:482px;width:13px;height:13px;border:1px solid #8e8f8f;background:linear-gradient(135deg,#dcdcdc,#f4f4f4 60%,#fff);box-shadow:inset 0 0 0 1px #f4f4f4"></div><svg class="abs" style="left:1714px;top:484px" width="9" height="9" viewBox="0 0 9 9"><path d="M1 4l2.2 3L7.8 .8" fill="none" stroke="#3a4a9a" stroke-width="1.7"/></svg><span class="abs" style="left:1729px;top:481.5px;font-size:12px;line-height:16px;white-space:nowrap">管脚特性</span>
<div class="abs" style="left:1712px;top:498px;width:13px;height:13px;border:1px solid #8e8f8f;background:linear-gradient(135deg,#dcdcdc,#f4f4f4 60%,#fff);box-shadow:inset 0 0 0 1px #f4f4f4"></div><svg class="abs" style="left:1714px;top:500px" width="9" height="9" viewBox="0 0 9 9"><path d="M1 4l2.2 3L7.8 .8" fill="none" stroke="#3a4a9a" stroke-width="1.7"/></svg><span class="abs" style="left:1729px;top:497.5px;font-size:12px;line-height:16px;white-space:nowrap">单元特性</span>
<div class="abs" style="left:1672px;top:517px;width:230px;height:21px;background:linear-gradient(#fbfbfb,#ececec 45%,#d6d6d6);border-top:1px solid #c8c8c8;border-bottom:1px solid #bdbdbd"></div><svg class="abs" style="left:1677px;top:522px" width="11" height="10" viewBox="0 0 11 10"><path d="M.8 .8h9.4L5.5 9z" fill="#dfe8f8" stroke="#5a7ab8" stroke-width="1"/></svg><div class="abs" style="left:1694px;top:520px;width:13px;height:13px;border:1px solid #8e8f8f;background:linear-gradient(135deg,#dcdcdc,#f4f4f4 60%,#fff);box-shadow:inset 0 0 0 1px #f4f4f4"></div><svg class="abs" style="left:1696px;top:522px" width="9" height="9" viewBox="0 0 9 9"><path d="M1 4l2.2 3L7.8 .8" fill="none" stroke="#3a4a9a" stroke-width="1.7"/></svg><span class="abs" style="left:1711px;top:519.5px;font-size:12px;line-height:16px;white-space:nowrap">制造对象</span>
<div class="abs" style="left:1694px;top:540px;width:13px;height:13px;border:1px solid #8e8f8f;background:linear-gradient(135deg,#dcdcdc,#f4f4f4 60%,#fff);box-shadow:inset 0 0 0 1px #f4f4f4"></div><svg class="abs" style="left:1696px;top:542px" width="9" height="9" viewBox="0 0 9 9"><path d="M1 4l2.2 3L7.8 .8" fill="none" stroke="#3a4a9a" stroke-width="1.7"/></svg><span class="abs" style="left:1711px;top:539.5px;font-size:12px;line-height:16px;white-space:nowrap">顶面</span><span class="abs" style="left:1837px;top:539.5px;font-size:12px;line-height:16px;white-space:nowrap">底面</span><div class="abs" style="left:1865px;top:540px;width:13px;height:13px;border:1px solid #8e8f8f;background:linear-gradient(135deg,#dcdcdc,#f4f4f4 60%,#fff);box-shadow:inset 0 0 0 1px #f4f4f4"></div><svg class="abs" style="left:1867px;top:542px" width="9" height="9" viewBox="0 0 9 9"><path d="M1 4l2.2 3L7.8 .8" fill="none" stroke="#3a4a9a" stroke-width="1.7"/></svg>
<div class="abs" style="left:1676px;top:556px;width:220px;height:1px;background:#a8a8a8"></div>
<div class="abs" style="left:1677px;top:562px;width:13px;height:12px;background:#3333cc;border-right:1px solid #555;border-bottom:1px solid #555;box-shadow:1px 1px 0 #a0a0a0"></div><div class="abs" style="left:1694px;top:561px;width:13px;height:13px;border:1px solid #8e8f8f;background:linear-gradient(135deg,#dcdcdc,#f4f4f4 60%,#fff);box-shadow:inset 0 0 0 1px #f4f4f4"></div><span class="abs" style="left:1711px;top:560.5px;font-size:12px;line-height:16px;white-space:nowrap">阻焊层</span>
<div class="abs" style="left:1865px;top:561px;width:13px;height:13px;border:1px solid #8e8f8f;background:linear-gradient(135deg,#dcdcdc,#f4f4f4 60%,#fff);box-shadow:inset 0 0 0 1px #f4f4f4"></div>
<div class="abs" style="left:1884px;top:562px;width:13px;height:12px;background:#cc0000;border-right:1px solid #555;border-bottom:1px solid #555;box-shadow:1px 1px 0 #a0a0a0"></div>
<div class="abs" style="left:1677px;top:578px;width:13px;height:12px;background:#3333cc;border-right:1px solid #555;border-bottom:1px solid #555;box-shadow:1px 1px 0 #a0a0a0"></div><div class="abs" style="left:1694px;top:577px;width:13px;height:13px;border:1px solid #8e8f8f;background:linear-gradient(135deg,#dcdcdc,#f4f4f4 60%,#fff);box-shadow:inset 0 0 0 1px #f4f4f4"></div><span class="abs" style="left:1711px;top:576.5px;font-size:12px;line-height:16px;white-space:nowrap">钢网层</span>
<div class="abs" style="left:1865px;top:577px;width:13px;height:13px;border:1px solid #8e8f8f;background:linear-gradient(135deg,#dcdcdc,#f4f4f4 60%,#fff);box-shadow:inset 0 0 0 1px #f4f4f4"></div>
<div class="abs" style="left:1884px;top:578px;width:13px;height:12px;background:#cc0000;border-right:1px solid #555;border-bottom:1px solid #555;box-shadow:1px 1px 0 #a0a0a0"></div>
<div class="abs" style="left:1677px;top:595px;width:10px;height:10px;border:1px solid #8a9ab5;border-radius:2px;background:linear-gradient(#fff,#dde3ee)"><div class="abs" style="left:1.5px;top:3.5px;width:5px;height:1.5px;background:#2a3a8a"></div></div><div class="abs" style="left:1694px;top:593px;width:13px;height:13px;border:1px solid #8e8f8f;background:linear-gradient(135deg,#dcdcdc,#f4f4f4 60%,#fff);box-shadow:inset 0 0 0 1px #f4f4f4"></div><svg class="abs" style="left:1696px;top:595px" width="9" height="9" viewBox="0 0 9 9"><path d="M1 4l2.2 3L7.8 .8" fill="none" stroke="#3a4a9a" stroke-width="1.7"/></svg><span class="abs" style="left:1711px;top:592.5px;font-size:12px;line-height:16px;white-space:nowrap">组装项</span>
<div class="abs" style="left:1865px;top:593px;width:13px;height:13px;border:1px solid #8e8f8f;background:linear-gradient(135deg,#dcdcdc,#f4f4f4 60%,#fff);box-shadow:inset 0 0 0 1px #f4f4f4"></div><svg class="abs" style="left:1867px;top:595px" width="9" height="9" viewBox="0 0 9 9"><path d="M1 4l2.2 3L7.8 .8" fill="none" stroke="#3a4a9a" stroke-width="1.7"/></svg>
<div class="abs" style="left:1694px;top:610px;width:13px;height:12px;background:#33cc33;border-right:1px solid #555;border-bottom:1px solid #555;box-shadow:1px 1px 0 #a0a0a0"></div><div class="abs" style="left:1712px;top:609px;width:13px;height:13px;border:1px solid #8e8f8f;background:linear-gradient(135deg,#dcdcdc,#f4f4f4 60%,#fff);box-shadow:inset 0 0 0 1px #f4f4f4"></div><svg class="abs" style="left:1714px;top:611px" width="9" height="9" viewBox="0 0 9 9"><path d="M1 4l2.2 3L7.8 .8" fill="none" stroke="#3a4a9a" stroke-width="1.7"/></svg><span class="abs" style="left:1729px;top:608.5px;font-size:12px;line-height:16px;white-space:nowrap">边框</span>
<div class="abs" style="left:1865px;top:609px;width:13px;height:13px;border:1px solid #8e8f8f;background:linear-gradient(135deg,#dcdcdc,#f4f4f4 60%,#fff);box-shadow:inset 0 0 0 1px #f4f4f4"></div>
<div class="abs" style="left:1884px;top:610px;width:13px;height:12px;background:#cc66ff;border-right:1px solid #555;border-bottom:1px solid #555;box-shadow:1px 1px 0 #a0a0a0"></div>
<div class="abs" style="left:1694px;top:626px;width:13px;height:12px;background:#33cc33;border-right:1px solid #555;border-bottom:1px solid #555;box-shadow:1px 1px 0 #a0a0a0"></div><div class="abs" style="left:1712px;top:625px;width:13px;height:13px;border:1px solid #8e8f8f;background:linear-gradient(135deg,#dcdcdc,#f4f4f4 60%,#fff);box-shadow:inset 0 0 0 1px #f4f4f4"></div><span class="abs" style="left:1729px;top:624.5px;font-size:12px;line-height:16px;white-space:nowrap">元件编号</span>
<div class="abs" style="left:1865px;top:625px;width:13px;height:13px;border:1px solid #8e8f8f;background:linear-gradient(135deg,#dcdcdc,#f4f4f4 60%,#fff);box-shadow:inset 0 0 0 1px #f4f4f4"></div>
<div class="abs" style="left:1884px;top:626px;width:13px;height:12px;background:#cc66ff;border-right:1px solid #555;border-bottom:1px solid #555;box-shadow:1px 1px 0 #a0a0a0"></div>
<div class="abs" style="left:1694px;top:642px;width:13px;height:12px;background:#33cc33;border-right:1px solid #555;border-bottom:1px solid #555;box-shadow:1px 1px 0 #a0a0a0"></div><div class="abs" style="left:1712px;top:641px;width:13px;height:13px;border:1px solid #8e8f8f;background:linear-gradient(135deg,#dcdcdc,#f4f4f4 60%,#fff);box-shadow:inset 0 0 0 1px #f4f4f4"></div><span class="abs" style="left:1729px;top:640.5px;font-size:12px;line-height:16px;white-space:nowrap">参考编号</span>
<div class="abs" style="left:1865px;top:641px;width:13px;height:13px;border:1px solid #8e8f8f;background:linear-gradient(135deg,#dcdcdc,#f4f4f4 60%,#fff);box-shadow:inset 0 0 0 1px #f4f4f4"></div><svg class="abs" style="left:1867px;top:643px" width="9" height="9" viewBox="0 0 9 9"><path d="M1 4l2.2 3L7.8 .8" fill="none" stroke="#3a4a9a" stroke-width="1.7"/></svg>
<div class="abs" style="left:1884px;top:642px;width:13px;height:12px;background:#cc66ff;border-right:1px solid #555;border-bottom:1px solid #555;box-shadow:1px 1px 0 #a0a0a0"></div>
<div class="abs" style="left:1677px;top:659px;width:10px;height:10px;border:1px solid #8a9ab5;border-radius:2px;background:linear-gradient(#fff,#dde3ee)"><div class="abs" style="left:1.5px;top:3.5px;width:5px;height:1.5px;background:#2a3a8a"></div></div><div class="abs" style="left:1694px;top:657px;width:13px;height:13px;border:1px solid #8e8f8f;background:linear-gradient(135deg,#dcdcdc,#f4f4f4 60%,#fff);box-shadow:inset 0 0 0 1px #f4f4f4"></div><svg class="abs" style="left:1696px;top:659px" width="9" height="9" viewBox="0 0 9 9"><path d="M1 4l2.2 3L7.8 .8" fill="none" stroke="#3a4a9a" stroke-width="1.7"/></svg><span class="abs" style="left:1711px;top:656.5px;font-size:12px;line-height:16px;white-space:nowrap">丝印项目</span>
<div class="abs" style="left:1865px;top:657px;width:13px;height:13px;border:1px solid #8e8f8f;background:linear-gradient(135deg,#dcdcdc,#f4f4f4 60%,#fff);box-shadow:inset 0 0 0 1px #f4f4f4"></div><svg class="abs" style="left:1867px;top:659px" width="9" height="9" viewBox="0 0 9 9"><path d="M1 4l2.2 3L7.8 .8" fill="none" stroke="#3a4a9a" stroke-width="1.7"/></svg>
<div class="abs" style="left:1694px;top:674px;width:13px;height:12px;background:#3399ff;border-right:1px solid #555;border-bottom:1px solid #555;box-shadow:1px 1px 0 #a0a0a0"></div><div class="abs" style="left:1712px;top:673px;width:13px;height:13px;border:1px solid #8e8f8f;background:linear-gradient(135deg,#dcdcdc,#f4f4f4 60%,#fff);box-shadow:inset 0 0 0 1px #f4f4f4"></div><span class="abs" style="left:1729px;top:672.5px;font-size:12px;line-height:16px;white-space:nowrap">边框</span>
<div class="abs" style="left:1865px;top:673px;width:13px;height:13px;border:1px solid #8e8f8f;background:linear-gradient(135deg,#dcdcdc,#f4f4f4 60%,#fff);box-shadow:inset 0 0 0 1px #f4f4f4"></div>
<div class="abs" style="left:1884px;top:674px;width:13px;height:12px;background:#ff99ff;border-right:1px solid #555;border-bottom:1px solid #555;box-shadow:1px 1px 0 #a0a0a0"></div>
<div class="abs" style="left:1694px;top:690px;width:13px;height:12px;background:#3399ff;border-right:1px solid #555;border-bottom:1px solid #555;box-shadow:1px 1px 0 #a0a0a0"></div><div class="abs" style="left:1712px;top:689px;width:13px;height:13px;border:1px solid #8e8f8f;background:linear-gradient(135deg,#dcdcdc,#f4f4f4 60%,#fff);box-shadow:inset 0 0 0 1px #f4f4f4"></div><span class="abs" style="left:1729px;top:688.5px;font-size:12px;line-height:16px;white-space:nowrap">元件编号</span>
<div class="abs" style="left:1865px;top:689px;width:13px;height:13px;border:1px solid #8e8f8f;background:linear-gradient(135deg,#dcdcdc,#f4f4f4 60%,#fff);box-shadow:inset 0 0 0 1px #f4f4f4"></div>
<div class="abs" style="left:1884px;top:690px;width:13px;height:12px;background:#ff99ff;border-right:1px solid #555;border-bottom:1px solid #555;box-shadow:1px 1px 0 #a0a0a0"></div>
<div class="abs" style="left:1694px;top:706px;width:13px;height:12px;background:#3399ff;border-right:1px solid #555;border-bottom:1px solid #555;box-shadow:1px 1px 0 #a0a0a0"></div><div class="abs" style="left:1712px;top:705px;width:13px;height:13px;border:1px solid #8e8f8f;background:linear-gradient(135deg,#dcdcdc,#f4f4f4 60%,#fff);box-shadow:inset 0 0 0 1px #f4f4f4"></div><span class="abs" style="left:1729px;top:704.5px;font-size:12px;line-height:16px;white-space:nowrap">参考编号</span>
<div class="abs" style="left:1865px;top:705px;width:13px;height:13px;border:1px solid #8e8f8f;background:linear-gradient(135deg,#dcdcdc,#f4f4f4 60%,#fff);box-shadow:inset 0 0 0 1px #f4f4f4"></div>
<div class="abs" style="left:1884px;top:706px;width:13px;height:12px;background:#ff99ff;border-right:1px solid #555;border-bottom:1px solid #555;box-shadow:1px 1px 0 #a0a0a0"></div>
<div class="abs" style="left:1694px;top:722px;width:13px;height:12px;background:#33ccff;border-right:1px solid #555;border-bottom:1px solid #555;box-shadow:1px 1px 0 #a0a0a0"></div><div class="abs" style="left:1712px;top:721px;width:13px;height:13px;border:1px solid #8e8f8f;background:linear-gradient(135deg,#dcdcdc,#f4f4f4 60%,#fff);box-shadow:inset 0 0 0 1px #f4f4f4"></div><span class="abs" style="left:1729px;top:720.5px;font-size:12px;line-height:16px;white-space:nowrap">已生成</span>
<div class="abs" style="left:1865px;top:721px;width:13px;height:13px;border:1px solid #8e8f8f;background:linear-gradient(135deg,#dcdcdc,#f4f4f4 60%,#fff);box-shadow:inset 0 0 0 1px #f4f4f4"></div>
<div class="abs" style="left:1884px;top:722px;width:13px;height:12px;background:#ffccff;border-right:1px solid #555;border-bottom:1px solid #555;box-shadow:1px 1px 0 #a0a0a0"></div>
<div class="abs" style="left:1677px;top:739px;width:10px;height:10px;border:1px solid #8a9ab5;border-radius:2px;background:linear-gradient(#fff,#dde3ee)"><div class="abs" style="left:1.5px;top:3.5px;width:5px;height:1.5px;background:#2a3a8a"></div></div><div class="abs" style="left:1694px;top:737px;width:13px;height:13px;border:1px solid #8e8f8f;background:linear-gradient(135deg,#dcdcdc,#f4f4f4 60%,#fff);box-shadow:inset 0 0 0 1px #f4f4f4"></div><svg class="abs" style="left:1696px;top:739px" width="9" height="9" viewBox="0 0 9 9"><path d="M1 4l2.2 3L7.8 .8" fill="none" stroke="#3a4a9a" stroke-width="1.7"/></svg><span class="abs" style="left:1711px;top:736.5px;font-size:12px;line-height:16px;white-space:nowrap">单元项目</span>
<div class="abs" style="left:1865px;top:737px;width:13px;height:13px;border:1px solid #8e8f8f;background:linear-gradient(135deg,#dcdcdc,#f4f4f4 60%,#fff);box-shadow:inset 0 0 0 1px #f4f4f4"></div><svg class="abs" style="left:1867px;top:739px" width="9" height="9" viewBox="0 0 9 9"><path d="M1 4l2.2 3L7.8 .8" fill="none" stroke="#3a4a9a" stroke-width="1.7"/></svg>
<div class="abs" style="left:1694px;top:754px;width:13px;height:12px;background:#ffffff;border-right:1px solid #555;border-bottom:1px solid #555;box-shadow:1px 1px 0 #a0a0a0"></div><div class="abs" style="left:1712px;top:753px;width:13px;height:13px;border:1px solid #8e8f8f;background:linear-gradient(135deg,#dcdcdc,#f4f4f4 60%,#fff);box-shadow:inset 0 0 0 1px #f4f4f4"></div><span class="abs" style="left:1729px;top:752.5px;font-size:12px;line-height:16px;white-space:nowrap">胶粘点</span>
<div class="abs" style="left:1865px;top:753px;width:13px;height:13px;border:1px solid #8e8f8f;background:linear-gradient(135deg,#dcdcdc,#f4f4f4 60%,#fff);box-shadow:inset 0 0 0 1px #f4f4f4"></div>
<div class="abs" style="left:1884px;top:754px;width:13px;height:12px;background:#ffffff;border-right:1px solid #555;border-bottom:1px solid #555;box-shadow:1px 1px 0 #a0a0a0"></div>
<div class="abs" style="left:1694px;top:770px;width:13px;height:12px;background:#ff0066;border-right:1px solid #555;border-bottom:1px solid #555;box-shadow:1px 1px 0 #a0a0a0"></div><div class="abs" style="left:1712px;top:769px;width:13px;height:13px;border:1px solid #8e8f8f;background:linear-gradient(135deg,#dcdcdc,#f4f4f4 60%,#fff);box-shadow:inset 0 0 0 1px #f4f4f4"></div><span class="abs" style="left:1729px;top:768.5px;font-size:12px;line-height:16px;white-space:nowrap">原点</span>
<div class="abs" style="left:1865px;top:769px;width:13px;height:13px;border:1px solid #8e8f8f;background:linear-gradient(135deg,#dcdcdc,#f4f4f4 60%,#fff);box-shadow:inset 0 0 0 1px #f4f4f4"></div>
<div class="abs" style="left:1884px;top:770px;width:13px;height:12px;background:#ff0099;border-right:1px solid #555;border-bottom:1px solid #555;box-shadow:1px 1px 0 #a0a0a0"></div>
<div class="abs" style="left:1677px;top:787px;width:10px;height:10px;border:1px solid #8a9ab5;border-radius:2px;background:linear-gradient(#fff,#dde3ee)"><div class="abs" style="left:1.5px;top:3.5px;width:5px;height:1.5px;background:#2a3a8a"></div></div><div class="abs" style="left:1694px;top:785px;width:13px;height:13px;border:1px solid #8e8f8f;background:linear-gradient(135deg,#dcdcdc,#f4f4f4 60%,#fff);box-shadow:inset 0 0 0 1px #f4f4f4"></div><svg class="abs" style="left:1696px;top:787px" width="9" height="9" viewBox="0 0 9 9"><path d="M1 4l2.2 3L7.8 .8" fill="none" stroke="#3a4a9a" stroke-width="1.7"/></svg><span class="abs" style="left:1711px;top:784.5px;font-size:12px;line-height:16px;white-space:nowrap">测试点项目</span>
<div class="abs" style="left:1865px;top:785px;width:13px;height:13px;border:1px solid #8e8f8f;background:linear-gradient(135deg,#dcdcdc,#f4f4f4 60%,#fff);box-shadow:inset 0 0 0 1px #f4f4f4"></div><svg class="abs" style="left:1867px;top:787px" width="9" height="9" viewBox="0 0 9 9"><path d="M1 4l2.2 3L7.8 .8" fill="none" stroke="#3a4a9a" stroke-width="1.7"/></svg>
<div class="abs" style="left:1694px;top:802px;width:13px;height:12px;background:#ffffff;border-right:1px solid #555;border-bottom:1px solid #555;box-shadow:1px 1px 0 #a0a0a0"></div><div class="abs" style="left:1712px;top:801px;width:13px;height:13px;border:1px solid #8e8f8f;background:linear-gradient(135deg,#dcdcdc,#f4f4f4 60%,#fff);box-shadow:inset 0 0 0 1px #f4f4f4"></div><svg class="abs" style="left:1714px;top:803px" width="9" height="9" viewBox="0 0 9 9"><path d="M1 4l2.2 3L7.8 .8" fill="none" stroke="#3a4a9a" stroke-width="1.7"/></svg><span class="abs" style="left:1729px;top:800.5px;font-size:12px;line-height:16px;white-space:nowrap">组装参考编号</span>
<div class="abs" style="left:1865px;top:801px;width:13px;height:13px;border:1px solid #8e8f8f;background:linear-gradient(135deg,#dcdcdc,#f4f4f4 60%,#fff);box-shadow:inset 0 0 0 1px #f4f4f4"></div><svg class="abs" style="left:1867px;top:803px" width="9" height="9" viewBox="0 0 9 9"><path d="M1 4l2.2 3L7.8 .8" fill="none" stroke="#3a4a9a" stroke-width="1.7"/></svg>
<div class="abs" style="left:1884px;top:802px;width:13px;height:12px;background:#ffffff;border-right:1px solid #555;border-bottom:1px solid #555;box-shadow:1px 1px 0 #a0a0a0"></div>
<div class="abs" style="left:1694px;top:818px;width:13px;height:12px;background:#ffffff;border-right:1px solid #555;border-bottom:1px solid #555;box-shadow:1px 1px 0 #a0a0a0"></div><div class="abs" style="left:1712px;top:817px;width:13px;height:13px;border:1px solid #8e8f8f;background:linear-gradient(135deg,#dcdcdc,#f4f4f4 60%,#fff);box-shadow:inset 0 0 0 1px #f4f4f4"></div><span class="abs" style="left:1729px;top:816.5px;font-size:12px;line-height:16px;white-space:nowrap">丝印参考编号</span>
<div class="abs" style="left:1865px;top:817px;width:13px;height:13px;border:1px solid #8e8f8f;background:linear-gradient(135deg,#dcdcdc,#f4f4f4 60%,#fff);box-shadow:inset 0 0 0 1px #f4f4f4"></div>
<div class="abs" style="left:1884px;top:818px;width:13px;height:12px;background:#ffffff;border-right:1px solid #555;border-bottom:1px solid #555;box-shadow:1px 1px 0 #a0a0a0"></div>
<div class="abs" style="left:1694px;top:834px;width:13px;height:12px;background:#ffff00;border-right:1px solid #555;border-bottom:1px solid #555;box-shadow:1px 1px 0 #a0a0a0"></div><div class="abs" style="left:1712px;top:833px;width:13px;height:13px;border:1px solid #8e8f8f;background:linear-gradient(135deg,#dcdcdc,#f4f4f4 60%,#fff);box-shadow:inset 0 0 0 1px #f4f4f4"></div><svg class="abs" style="left:1714px;top:835px" width="9" height="9" viewBox="0 0 9 9"><path d="M1 4l2.2 3L7.8 .8" fill="none" stroke="#3a4a9a" stroke-width="1.7"/></svg><span class="abs" style="left:1729px;top:832.5px;font-size:12px;line-height:16px;white-space:nowrap">探针图形</span>
<div class="abs" style="left:1865px;top:833px;width:13px;height:13px;border:1px solid #8e8f8f;background:linear-gradient(135deg,#dcdcdc,#f4f4f4 60%,#fff);box-shadow:inset 0 0 0 1px #f4f4f4"></div><svg class="abs" style="left:1867px;top:835px" width="9" height="9" viewBox="0 0 9 9"><path d="M1 4l2.2 3L7.8 .8" fill="none" stroke="#3a4a9a" stroke-width="1.7"/></svg>
<div class="abs" style="left:1884px;top:834px;width:13px;height:12px;background:#00ff00;border-right:1px solid #555;border-bottom:1px solid #555;box-shadow:1px 1px 0 #a0a0a0"></div>
<div class="abs" style="left:1672px;top:852px;width:230px;height:21px;background:linear-gradient(#fbfbfb,#ececec 45%,#d6d6d6);border-top:1px solid #c8c8c8;border-bottom:1px solid #bdbdbd"></div><svg class="abs" style="left:1677px;top:857px" width="11" height="10" viewBox="0 0 11 10"><path d="M.8 .8h9.4L5.5 9z" fill="#dfe8f8" stroke="#5a7ab8" stroke-width="1"/></svg><div class="abs" style="left:1694px;top:855px;width:13px;height:13px;border:1px solid #8e8f8f;background:linear-gradient(135deg,#dcdcdc,#f4f4f4 60%,#fff);box-shadow:inset 0 0 0 1px #f4f4f4"></div><span class="abs" style="left:1711px;top:854.5px;font-size:12px;line-height:16px;white-space:nowrap">材料</span>
<div class="abs" style="left:1677px;top:876px;width:13px;height:12px;background:#ff99cc;border-right:1px solid #555;border-bottom:1px solid #555;box-shadow:1px 1px 0 #a0a0a0"></div><div class="abs" style="left:1694px;top:875px;width:13px;height:13px;border:1px solid #c4c4c4;background:linear-gradient(135deg,#dcdcdc,#f4f4f4 60%,#fff);box-shadow:inset 0 0 0 1px #f4f4f4"></div><span class="abs" style="left:1711px;top:874.5px;font-size:12px;line-height:16px;white-space:nowrap">材料膜面</span>
<div class="abs" style="left:1677px;top:892px;width:13px;height:12px;background:#ffffff;border-right:1px solid #555;border-bottom:1px solid #555;box-shadow:1px 1px 0 #a0a0a0"></div><div class="abs" style="left:1694px;top:891px;width:13px;height:13px;border:1px solid #c4c4c4;background:linear-gradient(135deg,#dcdcdc,#f4f4f4 60%,#fff);box-shadow:inset 0 0 0 1px #f4f4f4"></div><span class="abs" style="left:1711px;top:890.5px;font-size:12px;line-height:16px;white-space:nowrap">材料面釉</span>
<div class="abs" style="left:1677px;top:909px;width:10px;height:10px;border:1px solid #8a9ab5;border-radius:2px;background:linear-gradient(#fff,#dde3ee)"><div class="abs" style="left:1.5px;top:3.5px;width:5px;height:1.5px;background:#2a3a8a"></div></div><span class="abs" style="left:1693px;top:906.5px;font-size:12px;line-height:16px;white-space:nowrap">电阻材料</span>
<div class="abs" style="left:1694px;top:923px;width:13px;height:2px;border:1px solid #b0b0b0;border-bottom:none"></div><div class="abs" style="left:1712px;top:923px;width:13px;height:2px;border:1px solid #b0b0b0;border-bottom:none"></div>
<div class="abs" style="left:1902px;top:170px;width:15px;height:755px;background:#f0f0f0;border-left:1px solid #e4e4e4"></div>
<div class="abs" style="left:1903px;top:186px;width:14px;height:320px;border:1px solid #a5a5a5;border-radius:2px;background:linear-gradient(90deg,#f2f2f2,#e3e3e3 50%,#d3d3d3)"><div class="abs" style="left:3px;top:156px;width:6px;height:7px;border-top:1px solid #7a7a7a;border-bottom:1px solid #7a7a7a"><div class="abs" style="left:0;top:2px;width:6px;height:1px;background:#7a7a7a"></div></div></div>
<svg class="abs" style="left:1906px;top:174px" width="8" height="5" viewBox="0 0 8 5"><path d="M0 4.5L4 .5l4 4z" fill="#444"/></svg><svg class="abs" style="left:1906px;top:914px" width="8" height="5" viewBox="0 0 8 5"><path d="M0 .5L4 4.5l4-4z" fill="#444"/></svg>
<div class="abs" style="left:1910px;top:517px;width:12px;height:60px;border-radius:5px;background:#444;border:1px solid #222"><div class="abs" style="left:3px;top:10px;width:2px;height:40px;background:linear-gradient(#f09020,#c8c020 50%,#30d030)"></div></div>
<div class="abs" style="left:1670px;top:925px;width:250px;height:4px;background:linear-gradient(#a8a8a8,#6a6a6a 50%,#8a8a8a 75%,#fff 76%)"></div>
<div class="abs" style="left:1676px;top:936px;width:144px;height:21px;border:1px solid #b8b8b8;border-radius:3px;background:linear-gradient(#f6f6f6,#ececec)"></div><svg class="abs" style="left:1807px;top:944px" width="8" height="5" viewBox="0 0 8 5"><path d="M0 .5h8L4 4.5z" fill="#9a9a9a"/></svg>
<div class="abs" style="left:1825px;top:935px;width:22px;height:24px;border:1px solid #e4e4e4;border-right:2px solid #7a7a7a;border-bottom:2px solid #7a7a7a;background:#f0f0f0"></div>
<div class="abs" style="left:1848px;top:935px;width:23px;height:24px;border:1px solid #e4e4e4;border-right:2px solid #7a7a7a;border-bottom:2px solid #7a7a7a;background:#f0f0f0"></div>
<div class="abs" style="left:1872px;top:935px;width:23px;height:24px;border:1px solid #e4e4e4;border-right:2px solid #7a7a7a;border-bottom:2px solid #7a7a7a;background:#f0f0f0"></div>
<svg class="abs" style="left:1825px;top:935px" width="70" height="24" viewBox="0 0 70 24"><path d="M4 17h3M9 17h3M14 17h3" stroke="#7a7a7a" stroke-width="3"/><rect x="27.5" y="5.5" width="14" height="14" fill="#787878" stroke="#444"/><rect x="30" y="6" width="9" height="6" fill="#f4f4f4"/><rect x="31" y="14" width="7" height="5" fill="#3a3a3a"/><rect x="32" y="15" width="2" height="3" fill="#ddd"/><path d="M52 6l12 12M64 6L52 18" stroke="#555" stroke-width="1.6"/></svg>
<div class="abs" style="left:0;top:972px;width:1920px;height:28px;background:linear-gradient(#aebbd3,#bcc8dd 20%,#bac6dc)"></div>
<div class="abs" style="left:2.0px;top:973.5px;width:156px;height:23.5px;border:1px solid #a3adbf;border-radius:3px;background:#f0f0f0;text-align:center;font-size:12px;line-height:18px;color:#000;white-space:pre;box-shadow:0 0 0 1px rgba(225,232,244,.8)"><span style="font-size:10.5px">1</span>  帮助</div>
<div class="abs" style="left:159.5px;top:973.5px;width:157px;height:23.5px;border:1px solid #a3adbf;border-radius:3px;background:#f0f0f0;text-align:center;font-size:12px;line-height:18px;color:#6d6d6d;white-space:pre;box-shadow:0 0 0 1px rgba(225,232,244,.8)"><span style="font-size:10.5px">2</span>  添加文本</div>
<div class="abs" style="left:319.5px;top:973.5px;width:157px;height:23.5px;border:1px solid #a3adbf;border-radius:3px;background:#f0f0f0;text-align:center;font-size:12px;line-height:18px;color:#6d6d6d;white-space:pre;box-shadow:0 0 0 1px rgba(225,232,244,.8)"><span style="font-size:10.5px">3</span>  添加直线</div>
<div class="abs" style="left:479.5px;top:973.5px;width:157px;height:23.5px;border:1px solid #a3adbf;border-radius:3px;background:#f0f0f0;text-align:center;font-size:12px;line-height:18px;color:#6d6d6d;white-space:pre;box-shadow:0 0 0 1px rgba(225,232,244,.8)"><span style="font-size:10.5px">4</span>  添加圆弧</div>
<div class="abs" style="left:639.5px;top:973.5px;width:157px;height:23.5px;border:1px solid #a3adbf;border-radius:3px;background:#f0f0f0;text-align:center;font-size:12px;line-height:18px;color:#6d6d6d;white-space:pre;box-shadow:0 0 0 1px rgba(225,232,244,.8)"><span style="font-size:10.5px">5</span>  添加折线</div>
<div class="abs" style="left:799.5px;top:973.5px;width:157px;height:23.5px;border:1px solid #a3adbf;border-radius:3px;background:#f0f0f0;text-align:center;font-size:12px;line-height:18px;color:#000;white-space:pre;box-shadow:0 0 0 1px rgba(225,232,244,.8)"><span style="font-size:10.5px">6</span>  撤消</div>
<div class="abs" style="left:959.5px;top:973.5px;width:157px;height:23.5px;border:1px solid #a3adbf;border-radius:3px;background:#f0f0f0;text-align:center;font-size:12px;line-height:18px;color:#000;white-space:pre;box-shadow:0 0 0 1px rgba(225,232,244,.8)"><span style="font-size:10.5px">7</span>  重做</div>
<div class="abs" style="left:1119.5px;top:973.5px;width:157px;height:23.5px;border:1px solid #a3adbf;border-radius:3px;background:#f0f0f0;text-align:center;font-size:12px;line-height:18px;color:#6d6d6d;white-space:pre;box-shadow:0 0 0 1px rgba(225,232,244,.8)"><span style="font-size:10.5px">8</span>  添加多边形</div>
<div class="abs" style="left:1279.5px;top:973.5px;width:157px;height:23.5px;border:1px solid #a3adbf;border-radius:3px;background:#f0f0f0;text-align:center;font-size:12px;line-height:18px;color:#6d6d6d;white-space:pre;box-shadow:0 0 0 1px rgba(225,232,244,.8)"><span style="font-size:10.5px">9</span>  添加矩形</div>
<div class="abs" style="left:1439.5px;top:973.5px;width:157px;height:23.5px;border:1px solid #a3adbf;border-radius:3px;background:#f0f0f0;text-align:center;font-size:12px;line-height:18px;color:#6d6d6d;white-space:pre;box-shadow:0 0 0 1px rgba(225,232,244,.8)"><span style="font-size:10.5px">10</span>  添加圆形</div>
<div class="abs" style="left:1599.5px;top:973.5px;width:157px;height:23.5px;border:1px solid #a3adbf;border-radius:3px;background:#f0f0f0;text-align:center;font-size:12px;line-height:18px;color:#000;white-space:pre;box-shadow:0 0 0 1px rgba(225,232,244,.8)"><span style="font-size:10.5px">11</span>  尺寸标注</div>
<div class="abs" style="left:1759.5px;top:973.5px;width:157px;height:23.5px;border:1px solid #a3adbf;border-radius:3px;background:#f0f0f0;text-align:center;font-size:12px;line-height:18px;color:#6d6d6d;white-space:pre;box-shadow:0 0 0 1px rgba(225,232,244,.8)"><span style="font-size:10.5px">12</span>  分配网络</div>
<div class="abs" style="left:0;top:1000px;width:1920px;height:21px;background-color:#435e8d;background-image:radial-gradient(circle at 1px 1px,#2b3f68 .75px,rgba(43,63,104,0) 1.15px),radial-gradient(circle at 3px 3px,#2b3f68 .75px,rgba(43,63,104,0) 1.15px);background-size:4px 4px"></div>
<div class="abs" style="left:4px;top:1002px;width:99px;height:20px;border:1px solid #8fa1c4;border-bottom:none;border-radius:3px 3px 0 0;background:#3d5383"><span class="abs" style="left:5px;top:2px;font-size:11.5px;line-height:15px;color:#dfe6f4;white-space:nowrap;letter-spacing:-.05px">Message Window</span></div>
<div class="abs" style="left:0;top:1021px;width:1920px;height:19px;background:#2b395b"></div>
<span class="abs" style="left:6px;top:1024px;font-size:12px;line-height:16px;color:#fff;white-space:nowrap">自动保存完成</span>
<div class="abs" style="left:433px;top:1023px;width:1px;height:15px;background:#c8d0e0"></div>
<div class="abs" style="left:865px;top:1023px;width:1px;height:15px;background:#c8d0e0"></div>
<div class="abs" style="left:1297px;top:1023px;width:1px;height:15px;background:#c8d0e0"></div>
<div class="abs" style="left:1730px;top:1023px;width:1px;height:15px;background:#c8d0e0"></div>
<div class="abs" style="left:1791px;top:1023px;width:1px;height:15px;background:#c8d0e0"></div>
<div class="abs" style="left:1858px;top:1023px;width:1px;height:15px;background:#c8d0e0"></div>
<div class="abs" style="left:1903px;top:1023px;width:1px;height:15px;background:#c8d0e0"></div>
<div class="abs" style="left:1735px;top:1025px;width:55px;height:13px;background:#000;font-size:11.5px;font-weight:bold;line-height:13px;white-space:pre;letter-spacing:-.4px;padding-left:1px"><span style="color:#3355ff">1H,</span> <span style="color:#ffff99">10V</span></div>
<span class="abs" style="left:1798px;top:1024px;font-size:11.5px;line-height:14px;color:#fff;white-space:nowrap">Gloss On</span>
<svg class="abs" style="left:1860px;top:1024px" width="60" height="16" viewBox="1860 1024 60 16"><circle cx="1866" cy="1030.5" r="3" fill="#d8a020"/><circle cx="1879" cy="1030.5" r="3.6" fill="#18e818"/><circle cx="1893.5" cy="1030.5" r="3.6" fill="#18e818"/><path d="M1915 1027v2M1912 1030v2M1915 1030v2M1909 1033v2M1912 1033v2M1915 1033v2" stroke="#d0d8e8" stroke-width="2"/></svg>
<div class="abs" style="left:0;top:1040px;width:1920px;height:8px;background:linear-gradient(90deg,#5c8fc2 0,#5a8dc0 300px,#27588f 800px,#1f4d83 1200px,#1b4377 1700px,#1b3f6e 100%);border-top:1px solid #86b4dd"></div>
<div class="abs" style="left:60px;top:1041px;width:58px;height:7px;border:1px solid #b8d4ee;border-bottom:none;border-radius:3px 3px 0 0;background:linear-gradient(#c6daf0,#a4c3e4)"></div>
<div class="abs" style="left:122px;top:1041px;width:54px;height:7px;border:1px solid #b8d4ee;border-bottom:none;border-radius:3px 3px 0 0;background:linear-gradient(#c6daf0,#a4c3e4)"></div>
<div class="abs" style="left:184px;top:1041px;width:58px;height:7px;border:1px solid #b8d4ee;border-bottom:none;border-radius:3px 3px 0 0;background:linear-gradient(#c6daf0,#a4c3e4)"></div>
<div class="abs" style="left:246px;top:1041px;width:51px;height:7px;border:1px solid #b8d4ee;border-bottom:none;border-radius:3px 3px 0 0;background:linear-gradient(#c6daf0,#a4c3e4)"></div>
<div class="abs" style="left:308px;top:1041px;width:59px;height:7px;border:1px solid #b8d4ee;border-bottom:none;border-radius:3px 3px 0 0;background:linear-gradient(#c6daf0,#a4c3e4)"></div>
<div class="abs" style="left:12px;top:1041px;width:30px;height:14px;border-radius:15px 15px 0 0;background:radial-gradient(circle at 50% 100%,#dfe9f4,#9db6d4);border:1px solid #d8e4f2"></div>
<svg class="abs" style="left:30px;top:1041px" width="360" height="7" viewBox="30 1041 360 7"><path d="M85 1048c2-4 8-5 14-4" stroke="#e8c020" stroke-width="2" fill="none"/><path d="M270 1048c2-4 8-5 14-4" stroke="#e8c020" stroke-width="2" fill="none"/><rect x="199" y="1045" width="30" height="3" fill="#e02040"/><rect x="135" y="1046.5" width="12" height="2" fill="#d8a840"/><rect x="322" y="1044" width="29" height="4" rx="2" fill="#3838b8"/><rect x="326" y="1046" width="21" height="2" fill="#f4f4ff"/></svg>
<div class="abs" style="left:1906px;top:1041px;width:14px;height:7px;background:linear-gradient(90deg,#7f98b8,#b8c8dc);border-left:1px solid #4a6a94"></div>
<svg class="abs" style="left:1848px;top:1041px" width="40" height="7" viewBox="0 0 40 7"><path d="M6 7V5.5h5V7M14 7V5.5h5V7" stroke="#fff" stroke-width="1.5" fill="none"/></svg>
<svg class="abs" style="left:1790px;top:978px;overflow:visible" width="120" height="62" viewBox="1790 978 120 62"><g fill="none" stroke="#1a5bad" stroke-width="2"><path d="M1808 987h25l9.5 10h26"/><path d="M1818 995.5h12l9.5 9h43l6-6"/></g><g fill="none" stroke="#f4a224" stroke-width="2.7"><circle cx="1803.5" cy="987.2" r="3.2"/><circle cx="1813.5" cy="995.6" r="3.2"/><circle cx="1872.5" cy="997.2" r="3.2"/><circle cx="1888.5" cy="997.2" r="3.2"/></g><text x="1794.5" y="1036" font-size="29" font-weight="bold" fill="#1a5bad" font-family="Liberation Sans,sans-serif" textLength="109" lengthAdjust="spacingAndGlyphs">EDA365</text></svg>
</body></html>
